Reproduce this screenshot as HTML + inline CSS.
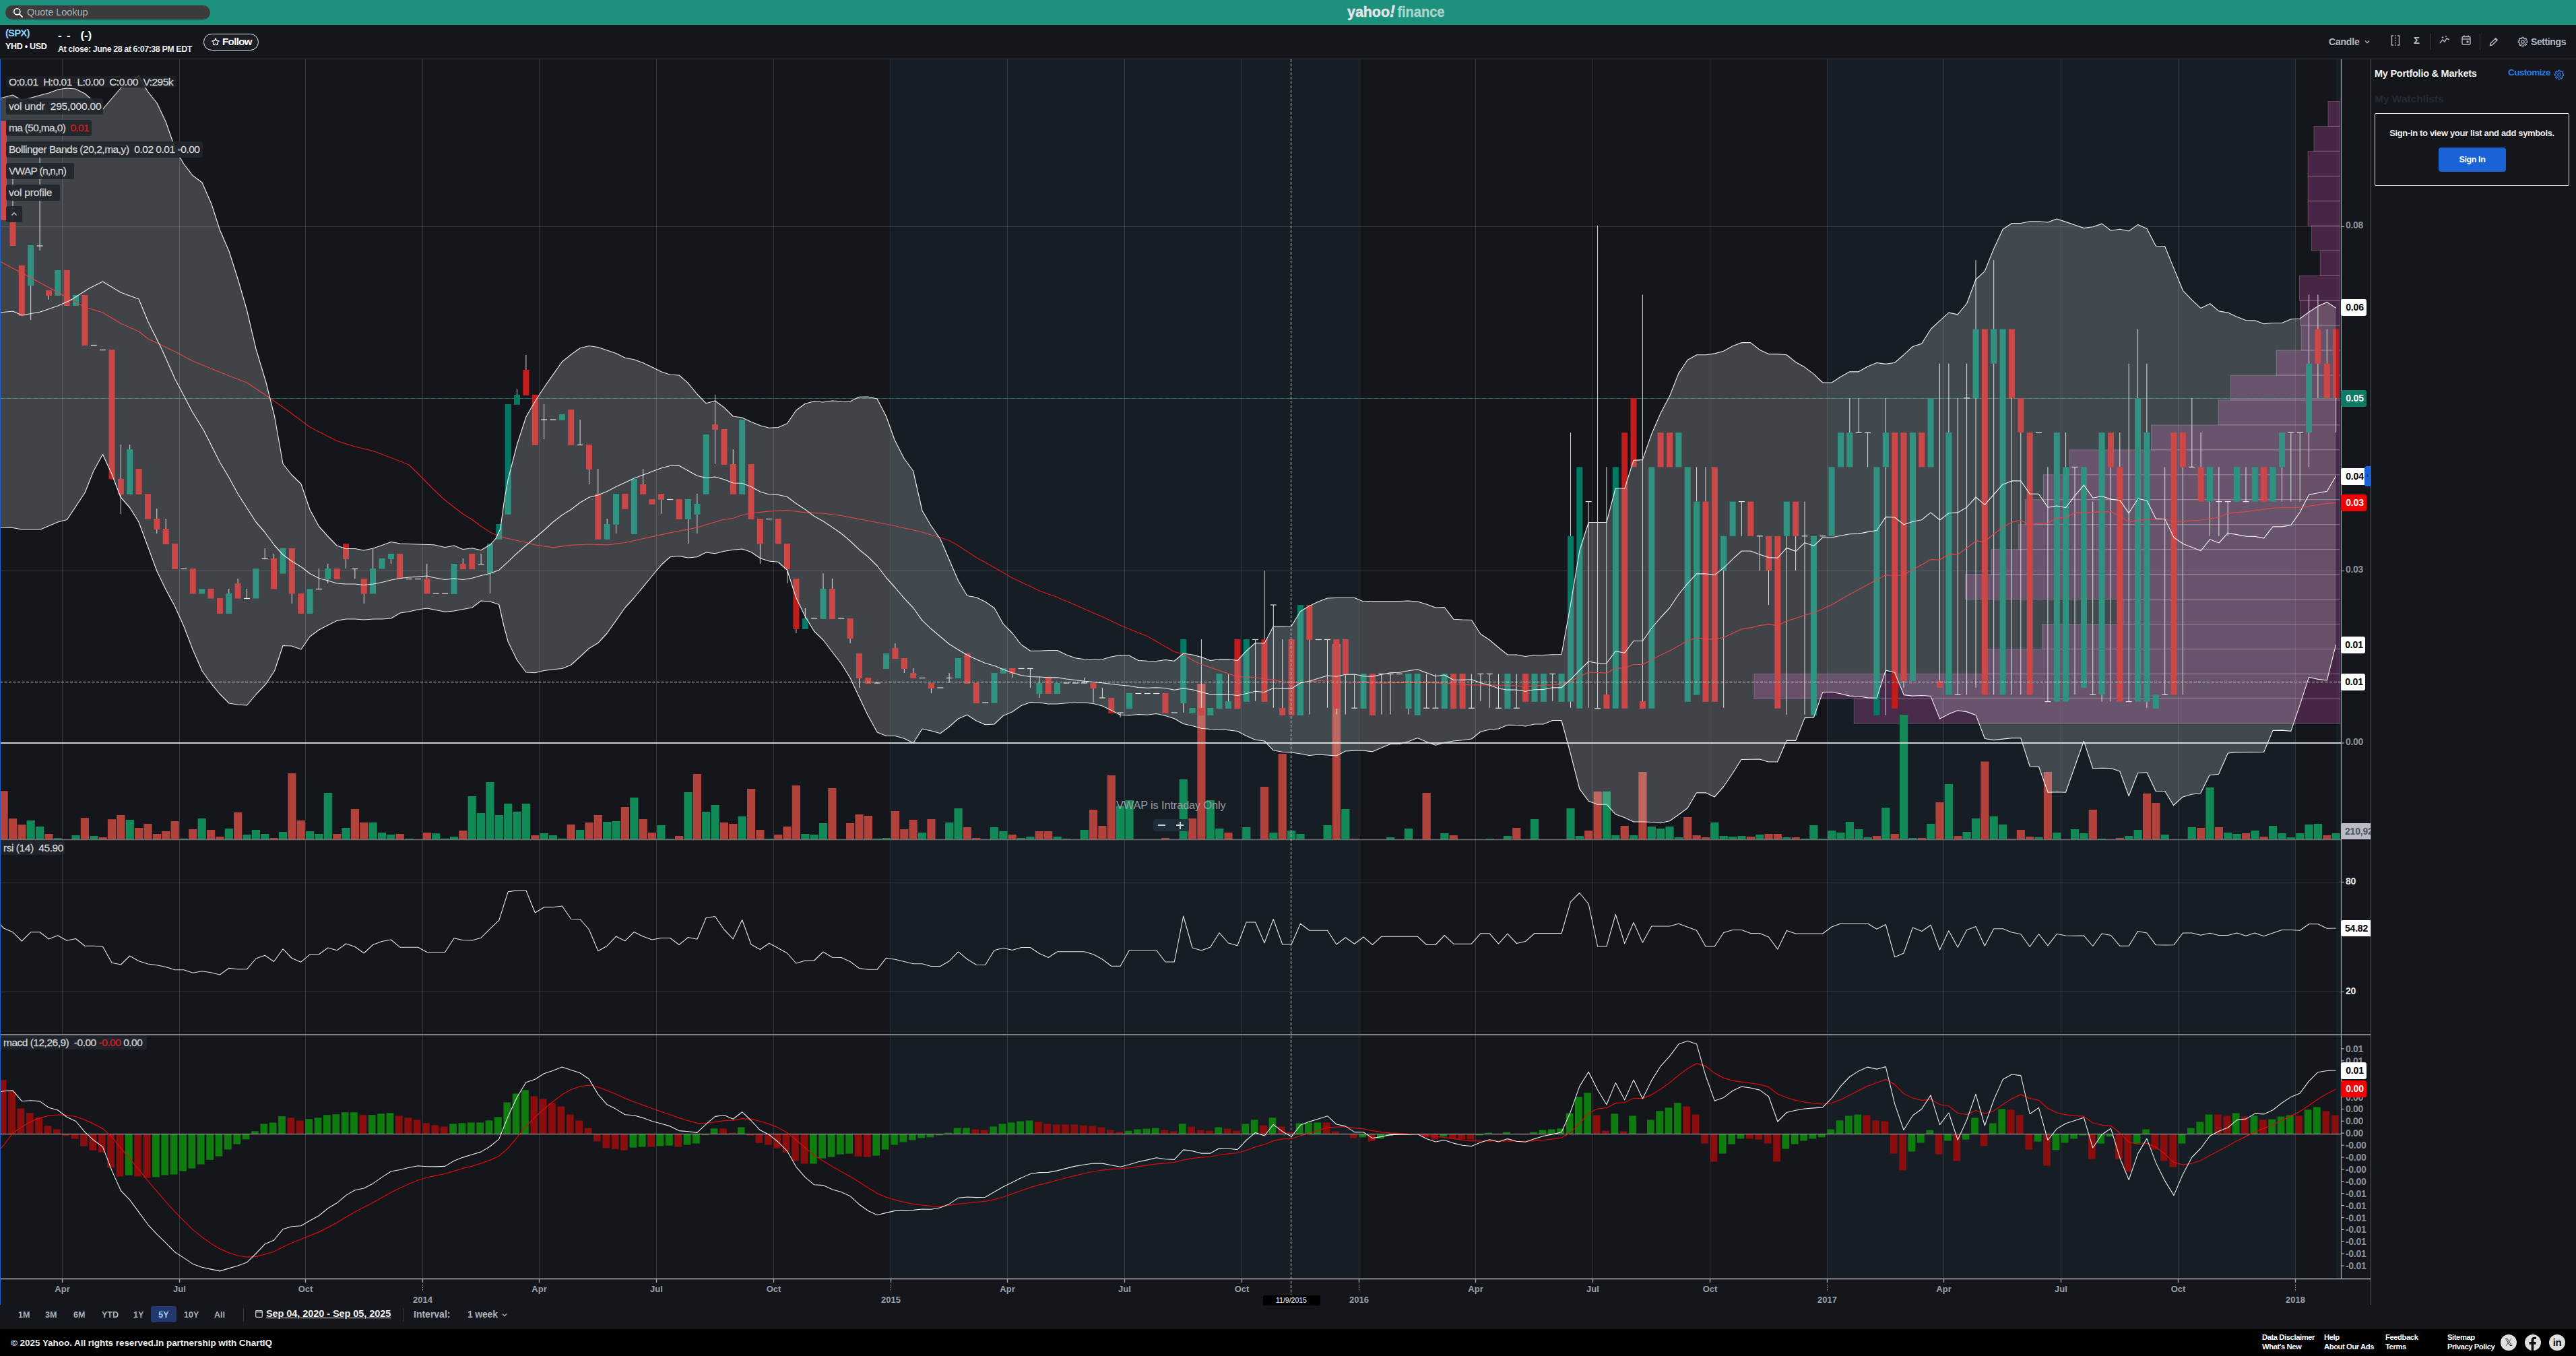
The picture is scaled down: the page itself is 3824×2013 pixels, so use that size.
<!DOCTYPE html>
<html><head><meta charset="utf-8"><title>chart</title>
<style>
*{box-sizing:border-box;margin:0;padding:0}
html,body{width:3824px;height:2013px;overflow:hidden;background:#14161b;font-family:"Liberation Sans",sans-serif;color:#fff}
.abs{position:absolute}
#hdr{left:0;top:0;width:3824px;height:37px;background:#1c917e}
#search{left:8px;top:8px;width:304px;height:21px;border-radius:11px;background:#3b3b3b}
#search span{position:absolute;left:32px;top:2px;font-size:14.5px;color:#a9b0ba;letter-spacing:-0.05px}
.lbl{-webkit-text-stroke-width:0.3px;position:absolute;left:9px;height:23.5px;background:rgba(33,37,44,0.92);border-radius:3px;font-size:15.5px;line-height:23.5px;color:#d2d2d2;padding-left:4px;white-space:nowrap;letter-spacing:-0.2px}
.ax{position:absolute;left:3482px;font-size:14px;letter-spacing:-0.3px;font-weight:bold;color:#8c939d;line-height:16px}
.axb{position:absolute;left:3475px;width:38px;height:25px;border-radius:3px;background:#fff;color:#000;font-size:14px;font-weight:bold;line-height:25px;text-align:center;padding-left:3px;letter-spacing:-0.2px}
.xl{position:absolute;font-size:13px;font-weight:bold;color:#9aa1ab;transform:translateX(-50%);white-space:nowrap}
.rng{position:absolute;top:1939.5px;height:24px;font-size:12.5px;font-weight:bold;color:#aab1bb;line-height:24px;text-align:center}
.ft{position:absolute;font-size:12.5px;color:#fff;white-space:nowrap;line-height:14px}
</style></head><body>
<div id="hdr" class="abs"></div>
<div id="search" class="abs"><svg class="abs" style="left:11px;top:3px" width="16" height="16" viewBox="0 0 16 16"><circle cx="6.3" cy="6.3" r="4.6" fill="none" stroke="#fff" stroke-width="1.6"/><line x1="9.8" y1="9.8" x2="14" y2="14" stroke="#fff" stroke-width="1.8" stroke-linecap="round"/></svg><span>Quote Lookup</span></div>
<svg class="abs" style="left:1996px;top:0px" width="160" height="37" viewBox="0 0 160 37">
<text x="4" y="25.200" font-family="Liberation Sans" font-weight="bold" font-size="22.300" fill="#e4e4e4" stroke="#e4e4e4" stroke-width="0.500" textLength="63" lengthAdjust="spacingAndGlyphs">yahoo</text>
<text x="67" y="24.500" font-family="Liberation Sans" font-weight="bold" font-style="italic" font-size="24" fill="#e4e4e4" stroke="#e4e4e4" stroke-width="0.500">!</text>
<text x="78.400" y="25.200" font-family="Liberation Sans" font-weight="bold" font-size="22.300" fill="#a9d3cb" stroke="#a9d3cb" stroke-width="0.400" textLength="70" lengthAdjust="spacingAndGlyphs">finance</text>
</svg>

<!-- toolbar -->
<div class="abs" style="left:8px;top:40px;font-size:15px;font-weight:bold;color:#8fd0ff;letter-spacing:-0.9px">(SPX)</div>
<div class="abs" style="left:8px;top:62px;font-size:12.5px;font-weight:bold;color:#fff;letter-spacing:-0.3px">YHD • USD</div>
<div class="abs" style="left:86px;top:42.5px;font-size:17px;font-weight:bold;color:#fff;word-spacing:3px;letter-spacing:-0.2px">- -&nbsp; (-)</div>
<div class="abs" style="left:86px;top:66px;font-size:12.5px;font-weight:bold;color:#e6e6e6;letter-spacing:-0.45px">At close: June 28 at 6:07:38 PM EDT</div>
<div class="abs" style="left:302px;top:50px;width:82px;height:25px;border:1.5px solid #e8e8e8;border-radius:13px;background:#1b1e25"></div>
<svg class="abs" style="left:313px;top:55px" width="14" height="14" viewBox="0 0 24 24"><path d="M12 3.5l2.6 5.6 6.1.7-4.5 4.2 1.2 6-5.4-3-5.4 3 1.2-6L3.3 9.800l6.1-.7z" fill="none" stroke="#fff" stroke-width="2" stroke-linejoin="round"/></svg>
<div class="abs" style="left:330px;top:53px;font-size:15px;font-weight:bold;color:#fff;letter-spacing:-0.6px">Follow</div>

<!-- toolbar right -->
<div class="abs" style="left:3457px;top:54px;font-size:14px;font-weight:bold;color:#b2b9c3;letter-spacing:-0.2px">Candle</div>
<svg class="abs" style="left:3509px;top:57px" width="10" height="10" viewBox="0 0 10 10"><path d="M2 3.5l3 3 3-3" fill="none" stroke="#b2b9c3" stroke-width="1.3"/></svg>
<svg class="abs" style="left:3548px;top:51px" width="16" height="18" viewBox="0 0 16 18"><path d="M5 2H2.500v14H5M11 2h2.500v14H11" fill="none" stroke="#b2b9c3" stroke-width="1.4"/><line x1="8" y1="1" x2="8" y2="17" stroke="#b2b9c3" stroke-width="1.2" stroke-dasharray="2 1.5"/></svg>
<div class="abs" style="left:3583px;top:51px;font-size:15px;font-weight:bold;color:#b2b9c3">Σ</div>
<div class="abs" style="left:3608px;top:50px;width:1px;height:24px;background:#3a3f47"></div>
<svg class="abs" style="left:3621px;top:52px" width="16" height="14" viewBox="0 0 16 14"><path d="M1 12l4-5 3 3 3-5 4 2" fill="none" stroke="#b2b9c3" stroke-width="1.4"/><path d="M5 2v3M3.500 3.500h3M10 1v2M9 2h2" stroke="#b2b9c3" stroke-width="0.9"/></svg>
<svg class="abs" style="left:3654px;top:52px" width="14" height="15" viewBox="0 0 14 15"><rect x="1" y="2.500" width="12" height="11.500" rx="1.500" fill="none" stroke="#b2b9c3" stroke-width="1.4"/><line x1="1" y1="6" x2="13" y2="6" stroke="#b2b9c3" stroke-width="1.4"/><line x1="4" y1="0.500" x2="4" y2="3" stroke="#b2b9c3" stroke-width="1.4"/><line x1="10" y1="0.500" x2="10" y2="3" stroke="#b2b9c3" stroke-width="1.4"/><rect x="7.500" y="8.500" width="3" height="3" fill="#b2b9c3"/></svg>
<div class="abs" style="left:3681px;top:50px;width:1px;height:24px;background:#3a3f47"></div>
<svg class="abs" style="left:3695px;top:55px" width="14" height="14" viewBox="0 0 14 14"><path d="M1.500 12.500l.8-3.300 7.500-7.500 2.500 2.500-7.500 7.500z" fill="none" stroke="#b2b9c3" stroke-width="1.4" stroke-linejoin="round"/><line x1="8.800" y1="2.700" x2="11.300" y2="5.200" stroke="#b2b9c3" stroke-width="1.2"/></svg>
<svg class="abs" style="left:3737px;top:54px" width="16" height="16" viewBox="0 0 16 16"><path d="M6.68 3.07 L6.95 1.38 L9.05 1.38 L9.32 3.07 L10.55 3.58 L11.94 2.58 L13.42 4.06 L12.42 5.45 L12.93 6.68 L14.62 6.95 L14.62 9.05 L12.93 9.32 L12.42 10.55 L13.42 11.94 L11.94 13.42 L10.55 12.42 L9.32 12.93 L9.05 14.62 L6.95 14.62 L6.68 12.93 L5.45 12.42 L4.06 13.42 L2.58 11.94 L3.58 10.55 L3.07 9.32 L1.38 9.05 L1.38 6.95 L3.07 6.68 L3.58 5.45 L2.58 4.06 L4.06 2.58 L5.45 3.58Z" fill="none" stroke="#aab1bb" stroke-width="1.350" stroke-linejoin="round"/><circle cx="8" cy="8" r="2.200" fill="none" stroke="#aab1bb" stroke-width="1.300"/></svg>
<div class="abs" style="left:3757px;top:54px;font-size:14px;font-weight:bold;color:#b2b9c3;letter-spacing:-0.4px">Settings</div>

<div class="abs" style="left:0;top:87px;width:3824px;height:1px;background:#3a3f45"></div>

<!-- chart -->
<svg class="abs" style="left:0;top:0" width="3824" height="2013" viewBox="0 0 3824 2013">
<rect x="1322.5" y="88" width="695.0" height="1810" fill="#161d25"/>
<rect x="2712.5" y="88" width="695.0" height="1810" fill="#161d25"/>
<rect x="3468" y="88" width="7" height="1810" fill="#161d25"/>
<line x1="92.5" y1="88" x2="92.5" y2="1898" stroke="rgba(255,255,255,0.13)" stroke-width="1"/>
<line x1="266.5" y1="88" x2="266.5" y2="1898" stroke="rgba(255,255,255,0.13)" stroke-width="1"/>
<line x1="453.5" y1="88" x2="453.5" y2="1898" stroke="rgba(255,255,255,0.13)" stroke-width="1"/>
<line x1="627.5" y1="88" x2="627.5" y2="1898" stroke="rgba(255,255,255,0.13)" stroke-width="1"/>
<line x1="800.5" y1="88" x2="800.5" y2="1898" stroke="rgba(255,255,255,0.13)" stroke-width="1"/>
<line x1="974.5" y1="88" x2="974.5" y2="1898" stroke="rgba(255,255,255,0.13)" stroke-width="1"/>
<line x1="1148.5" y1="88" x2="1148.5" y2="1898" stroke="rgba(255,255,255,0.13)" stroke-width="1"/>
<line x1="1322.5" y1="88" x2="1322.5" y2="1898" stroke="rgba(255,255,255,0.13)" stroke-width="1"/>
<line x1="1495.5" y1="88" x2="1495.5" y2="1898" stroke="rgba(255,255,255,0.13)" stroke-width="1"/>
<line x1="1669.5" y1="88" x2="1669.5" y2="1898" stroke="rgba(255,255,255,0.13)" stroke-width="1"/>
<line x1="1843.5" y1="88" x2="1843.5" y2="1898" stroke="rgba(255,255,255,0.13)" stroke-width="1"/>
<line x1="2017.5" y1="88" x2="2017.5" y2="1898" stroke="rgba(255,255,255,0.13)" stroke-width="1"/>
<line x1="2190.5" y1="88" x2="2190.5" y2="1898" stroke="rgba(255,255,255,0.13)" stroke-width="1"/>
<line x1="2364.5" y1="88" x2="2364.5" y2="1898" stroke="rgba(255,255,255,0.13)" stroke-width="1"/>
<line x1="2538.5" y1="88" x2="2538.5" y2="1898" stroke="rgba(255,255,255,0.13)" stroke-width="1"/>
<line x1="2712.5" y1="88" x2="2712.5" y2="1898" stroke="rgba(255,255,255,0.13)" stroke-width="1"/>
<line x1="2885.5" y1="88" x2="2885.5" y2="1898" stroke="rgba(255,255,255,0.13)" stroke-width="1"/>
<line x1="3059.5" y1="88" x2="3059.5" y2="1898" stroke="rgba(255,255,255,0.13)" stroke-width="1"/>
<line x1="3233.5" y1="88" x2="3233.5" y2="1898" stroke="rgba(255,255,255,0.13)" stroke-width="1"/>
<line x1="3407.5" y1="88" x2="3407.5" y2="1898" stroke="rgba(255,255,255,0.13)" stroke-width="1"/>
<line x1="0" y1="336.5" x2="3475" y2="336.5" stroke="rgba(255,255,255,0.13)" stroke-width="1"/>
<line x1="0" y1="847.5" x2="3475" y2="847.5" stroke="rgba(255,255,255,0.13)" stroke-width="1"/>
<line x1="0" y1="1309.5" x2="3475" y2="1309.5" stroke="rgba(255,255,255,0.13)" stroke-width="1"/>
<line x1="0" y1="1472.5" x2="3475" y2="1472.5" stroke="rgba(255,255,255,0.13)" stroke-width="1"/>
<g fill="rgba(190,76,165,0.3)" stroke="rgba(200,190,200,0.28)" stroke-width="1">
<rect x="3456" y="150.5" width="17.3" height="37"/>
<rect x="3435" y="187.4" width="38.3" height="37"/>
<rect x="3426" y="224.4" width="47.3" height="37"/>
<rect x="3426" y="261.4" width="47.3" height="37"/>
<rect x="3426" y="298.3" width="47.3" height="37"/>
<rect x="3431.5" y="335.2" width="41.8" height="37"/>
<rect x="3444.2" y="372.2" width="29.1" height="37"/>
<rect x="3413.3" y="409.2" width="60" height="37"/>
<rect x="3414.5" y="446.1" width="58.8" height="37"/>
<rect x="3416.3" y="483.1" width="57" height="37"/>
<rect x="3379.3" y="520" width="94" height="37"/>
<rect x="3311.3" y="557" width="162" height="37"/>
<rect x="3293.4" y="593.9" width="179.9" height="37"/>
<rect x="3193.5" y="630.9" width="279.8" height="37"/>
<rect x="3072.4" y="667.8" width="400.9" height="37"/>
<rect x="3033.3" y="704.8" width="440" height="37"/>
<rect x="3006.3" y="741.7" width="467" height="37"/>
<rect x="2996.4" y="778.7" width="476.9" height="37"/>
<rect x="2956.3" y="815.6" width="517" height="37"/>
<rect x="2917.6" y="852.6" width="555.7" height="37"/>
<rect x="3152" y="889.5" width="321.3" height="37"/>
<rect x="3031.4" y="926.5" width="441.9" height="37"/>
<rect x="2950" y="963.4" width="523.3" height="37"/>
<rect x="2604" y="1000.4" width="869.3" height="37"/>
<rect x="2752.3" y="1037.3" width="721" height="37"/>
</g>
<rect x="-0.5" y="1174.2" width="12.2" height="71.8" fill="#b2423c"/>
<rect x="12.9" y="1215.2" width="12.2" height="30.8" fill="#b2423c"/>
<rect x="26.3" y="1224.2" width="12.2" height="21.8" fill="#b2423c"/>
<rect x="39.6" y="1218" width="12.2" height="28" fill="#118a58"/>
<rect x="53" y="1227" width="12.2" height="19" fill="#118a58"/>
<rect x="66.4" y="1238" width="12.2" height="8" fill="#b2423c"/>
<rect x="79.7" y="1244.2" width="12.2" height="1.8" fill="#118a58"/>
<rect x="106.5" y="1240" width="12.2" height="6" fill="#118a58"/>
<rect x="119.8" y="1214.2" width="12.2" height="31.8" fill="#b2423c"/>
<rect x="133.2" y="1241" width="12.2" height="5" fill="#118a58"/>
<rect x="146.6" y="1243" width="12.2" height="3" fill="#b2423c"/>
<rect x="159.9" y="1216.2" width="12.2" height="29.8" fill="#b2423c"/>
<rect x="173.3" y="1210" width="12.2" height="36" fill="#b2423c"/>
<rect x="186.7" y="1217" width="12.2" height="29" fill="#118a58"/>
<rect x="200" y="1229" width="12.2" height="17" fill="#b2423c"/>
<rect x="213.4" y="1223" width="12.2" height="23" fill="#b2423c"/>
<rect x="226.8" y="1238" width="12.2" height="8" fill="#b2423c"/>
<rect x="240.1" y="1234" width="12.2" height="12" fill="#b2423c"/>
<rect x="253.5" y="1219" width="12.2" height="27" fill="#b2423c"/>
<rect x="266.9" y="1244.8" width="12.2" height="1.2" fill="#118a58"/>
<rect x="280.2" y="1231" width="12.2" height="15" fill="#b2423c"/>
<rect x="293.6" y="1215" width="12.2" height="31" fill="#118a58"/>
<rect x="307" y="1232" width="12.2" height="14" fill="#b2423c"/>
<rect x="320.3" y="1242" width="12.2" height="4" fill="#b2423c"/>
<rect x="333.7" y="1230" width="12.2" height="16" fill="#118a58"/>
<rect x="347.1" y="1206" width="12.2" height="40" fill="#b2423c"/>
<rect x="360.4" y="1239" width="12.2" height="7" fill="#118a58"/>
<rect x="373.8" y="1232" width="12.2" height="14" fill="#118a58"/>
<rect x="387.2" y="1238" width="12.2" height="8" fill="#118a58"/>
<rect x="400.5" y="1244" width="12.2" height="2" fill="#b2423c"/>
<rect x="413.9" y="1235" width="12.2" height="11" fill="#118a58"/>
<rect x="427.3" y="1148" width="12.2" height="98" fill="#b2423c"/>
<rect x="440.6" y="1218" width="12.2" height="28" fill="#b2423c"/>
<rect x="454" y="1234" width="12.2" height="12" fill="#118a58"/>
<rect x="467.4" y="1238" width="12.2" height="8" fill="#118a58"/>
<rect x="480.7" y="1177" width="12.2" height="69" fill="#118a58"/>
<rect x="494.1" y="1238" width="12.2" height="8" fill="#b2423c"/>
<rect x="507.5" y="1229" width="12.2" height="17" fill="#118a58"/>
<rect x="520.8" y="1201" width="12.2" height="45" fill="#b2423c"/>
<rect x="534.2" y="1221" width="12.2" height="25" fill="#b2423c"/>
<rect x="547.6" y="1221" width="12.2" height="25" fill="#118a58"/>
<rect x="560.9" y="1236" width="12.2" height="10" fill="#118a58"/>
<rect x="574.3" y="1239" width="12.2" height="7" fill="#118a58"/>
<rect x="587.7" y="1238" width="12.2" height="8" fill="#b2423c"/>
<rect x="601" y="1245" width="12.2" height="1" fill="#118a58"/>
<rect x="627.8" y="1236" width="12.2" height="10" fill="#b2423c"/>
<rect x="641.1" y="1237.2" width="12.2" height="8.8" fill="#118a58"/>
<rect x="654.5" y="1244.8" width="12.2" height="1.2" fill="#118a58"/>
<rect x="667.9" y="1242.2" width="12.2" height="3.8" fill="#118a58"/>
<rect x="681.2" y="1233" width="12.2" height="13" fill="#b2423c"/>
<rect x="694.6" y="1182" width="12.2" height="64" fill="#118a58"/>
<rect x="708" y="1207" width="12.2" height="39" fill="#118a58"/>
<rect x="721.3" y="1161" width="12.2" height="85" fill="#118a58"/>
<rect x="734.7" y="1210" width="12.2" height="36" fill="#118a58"/>
<rect x="748.1" y="1193" width="12.2" height="53" fill="#118a58"/>
<rect x="761.4" y="1204.8" width="12.2" height="41.2" fill="#118a58"/>
<rect x="774.8" y="1193" width="12.2" height="53" fill="#118a58"/>
<rect x="788.2" y="1240" width="12.2" height="6" fill="#b2423c"/>
<rect x="801.5" y="1237" width="12.2" height="9" fill="#118a58"/>
<rect x="814.9" y="1240" width="12.2" height="6" fill="#118a58"/>
<rect x="828.3" y="1244.8" width="12.2" height="1.2" fill="#118a58"/>
<rect x="841.6" y="1224" width="12.2" height="22" fill="#b2423c"/>
<rect x="855" y="1232" width="12.2" height="14" fill="#118a58"/>
<rect x="868.4" y="1221" width="12.2" height="25" fill="#b2423c"/>
<rect x="881.7" y="1210" width="12.2" height="36" fill="#b2423c"/>
<rect x="895.1" y="1220" width="12.2" height="26" fill="#118a58"/>
<rect x="908.5" y="1219" width="12.2" height="27" fill="#118a58"/>
<rect x="921.8" y="1198" width="12.2" height="48" fill="#b2423c"/>
<rect x="935.2" y="1184" width="12.2" height="62" fill="#118a58"/>
<rect x="948.6" y="1216" width="12.2" height="30" fill="#b2423c"/>
<rect x="961.9" y="1236" width="12.2" height="10" fill="#b2423c"/>
<rect x="975.3" y="1225" width="12.2" height="21" fill="#118a58"/>
<rect x="988.7" y="1245" width="12.2" height="1" fill="#118a58"/>
<rect x="1002" y="1241" width="12.2" height="5" fill="#b2423c"/>
<rect x="1015.4" y="1176" width="12.2" height="70" fill="#118a58"/>
<rect x="1028.8" y="1149" width="12.2" height="97" fill="#b2423c"/>
<rect x="1042.1" y="1205" width="12.2" height="41" fill="#118a58"/>
<rect x="1055.5" y="1195" width="12.2" height="51" fill="#118a58"/>
<rect x="1068.9" y="1221" width="12.2" height="25" fill="#b2423c"/>
<rect x="1082.2" y="1223" width="12.2" height="23" fill="#b2423c"/>
<rect x="1095.6" y="1212" width="12.2" height="34" fill="#118a58"/>
<rect x="1109" y="1171" width="12.2" height="75" fill="#b2423c"/>
<rect x="1122.3" y="1232" width="12.2" height="14" fill="#b2423c"/>
<rect x="1135.7" y="1245" width="12.2" height="1" fill="#118a58"/>
<rect x="1149.1" y="1239" width="12.2" height="7" fill="#b2423c"/>
<rect x="1162.4" y="1227" width="12.2" height="19" fill="#b2423c"/>
<rect x="1175.8" y="1166" width="12.2" height="80" fill="#b2423c"/>
<rect x="1189.2" y="1238" width="12.2" height="8" fill="#118a58"/>
<rect x="1202.5" y="1239" width="12.2" height="7" fill="#118a58"/>
<rect x="1215.9" y="1222" width="12.2" height="24" fill="#118a58"/>
<rect x="1229.3" y="1170" width="12.2" height="76" fill="#b2423c"/>
<rect x="1256" y="1222" width="12.2" height="24" fill="#b2423c"/>
<rect x="1269.4" y="1209" width="12.2" height="37" fill="#b2423c"/>
<rect x="1282.8" y="1211" width="12.2" height="35" fill="#b2423c"/>
<rect x="1296.1" y="1244.8" width="12.2" height="1.2" fill="#118a58"/>
<rect x="1309.5" y="1244" width="12.2" height="2" fill="#118a58"/>
<rect x="1322.9" y="1204" width="12.2" height="42" fill="#b2423c"/>
<rect x="1336.2" y="1231" width="12.2" height="15" fill="#b2423c"/>
<rect x="1349.6" y="1217" width="12.2" height="29" fill="#b2423c"/>
<rect x="1363" y="1236" width="12.2" height="10" fill="#118a58"/>
<rect x="1376.3" y="1216" width="12.2" height="30" fill="#b2423c"/>
<rect x="1403.1" y="1221" width="12.2" height="25" fill="#118a58"/>
<rect x="1416.4" y="1200" width="12.2" height="46" fill="#118a58"/>
<rect x="1429.8" y="1228" width="12.2" height="18" fill="#b2423c"/>
<rect x="1443.2" y="1244" width="12.2" height="2" fill="#b2423c"/>
<rect x="1469.9" y="1228" width="12.2" height="18" fill="#118a58"/>
<rect x="1483.3" y="1234" width="12.2" height="12" fill="#118a58"/>
<rect x="1496.6" y="1239" width="12.2" height="7" fill="#b2423c"/>
<rect x="1510" y="1244" width="12.2" height="2" fill="#118a58"/>
<rect x="1523.4" y="1242" width="12.2" height="4" fill="#118a58"/>
<rect x="1536.7" y="1234" width="12.2" height="12" fill="#b2423c"/>
<rect x="1550.1" y="1234" width="12.2" height="12" fill="#b2423c"/>
<rect x="1563.5" y="1242" width="12.2" height="4" fill="#118a58"/>
<rect x="1576.8" y="1245" width="12.2" height="1" fill="#118a58"/>
<rect x="1603.6" y="1232" width="12.2" height="14" fill="#118a58"/>
<rect x="1616.9" y="1202" width="12.2" height="44" fill="#b2423c"/>
<rect x="1630.3" y="1226" width="12.2" height="20" fill="#b2423c"/>
<rect x="1643.7" y="1151" width="12.2" height="95" fill="#b2423c"/>
<rect x="1657" y="1196" width="12.2" height="50" fill="#118a58"/>
<rect x="1670.4" y="1188" width="12.2" height="58" fill="#118a58"/>
<rect x="1723.9" y="1244" width="12.2" height="2" fill="#b2423c"/>
<rect x="1750.6" y="1157" width="12.2" height="89" fill="#118a58"/>
<rect x="1764" y="1215" width="12.2" height="31" fill="#b2423c"/>
<rect x="1777.3" y="1015" width="12.2" height="231" fill="#b2423c"/>
<rect x="1790.7" y="1188" width="12.2" height="58" fill="#118a58"/>
<rect x="1804.1" y="1230" width="12.2" height="16" fill="#118a58"/>
<rect x="1817.4" y="1236" width="12.2" height="10" fill="#b2423c"/>
<rect x="1844.2" y="1228" width="12.2" height="18" fill="#118a58"/>
<rect x="1870.9" y="1168" width="12.2" height="78" fill="#b2423c"/>
<rect x="1884.3" y="1236" width="12.2" height="10" fill="#118a58"/>
<rect x="1897.6" y="1119" width="12.2" height="127" fill="#b2423c"/>
<rect x="1911" y="1233" width="12.2" height="13" fill="#118a58"/>
<rect x="1924.4" y="1238" width="12.2" height="8" fill="#118a58"/>
<rect x="1964.5" y="1225" width="12.2" height="21" fill="#118a58"/>
<rect x="1977.8" y="956" width="12.2" height="290" fill="#b2423c"/>
<rect x="1991.2" y="1201" width="12.2" height="45" fill="#118a58"/>
<rect x="2004.6" y="1245" width="12.2" height="1" fill="#b2423c"/>
<rect x="2058" y="1243" width="12.2" height="3" fill="#118a58"/>
<rect x="2084.8" y="1230" width="12.2" height="16" fill="#118a58"/>
<rect x="2111.5" y="1177" width="12.2" height="69" fill="#b2423c"/>
<rect x="2138.2" y="1237" width="12.2" height="9" fill="#118a58"/>
<rect x="2151.6" y="1240" width="12.2" height="6" fill="#b2423c"/>
<rect x="2205.1" y="1245" width="12.2" height="1" fill="#118a58"/>
<rect x="2231.8" y="1241" width="12.2" height="5" fill="#118a58"/>
<rect x="2245.2" y="1229" width="12.2" height="17" fill="#b2423c"/>
<rect x="2271.9" y="1216" width="12.2" height="30" fill="#118a58"/>
<rect x="2325.4" y="1200" width="12.2" height="46" fill="#118a58"/>
<rect x="2338.7" y="1241" width="12.2" height="5" fill="#118a58"/>
<rect x="2352.1" y="1233" width="12.2" height="13" fill="#b2423c"/>
<rect x="2365.5" y="1175" width="12.2" height="71" fill="#b2423c"/>
<rect x="2378.8" y="1175" width="12.2" height="71" fill="#118a58"/>
<rect x="2392.2" y="1240" width="12.2" height="6" fill="#118a58"/>
<rect x="2405.6" y="1226" width="12.2" height="20" fill="#b2423c"/>
<rect x="2418.9" y="1240" width="12.2" height="6" fill="#118a58"/>
<rect x="2432.3" y="1146" width="12.2" height="100" fill="#b2423c"/>
<rect x="2445.7" y="1227" width="12.2" height="19" fill="#118a58"/>
<rect x="2459" y="1230" width="12.2" height="16" fill="#118a58"/>
<rect x="2472.4" y="1227" width="12.2" height="19" fill="#118a58"/>
<rect x="2485.8" y="1243" width="12.2" height="3" fill="#118a58"/>
<rect x="2499.1" y="1213" width="12.2" height="33" fill="#b2423c"/>
<rect x="2512.5" y="1240" width="12.2" height="6" fill="#b2423c"/>
<rect x="2525.9" y="1243" width="12.2" height="3" fill="#b2423c"/>
<rect x="2539.2" y="1221" width="12.2" height="25" fill="#118a58"/>
<rect x="2552.6" y="1241" width="12.2" height="5" fill="#118a58"/>
<rect x="2566" y="1242" width="12.2" height="4" fill="#118a58"/>
<rect x="2579.4" y="1241" width="12.2" height="5" fill="#118a58"/>
<rect x="2592.7" y="1242" width="12.2" height="4" fill="#b2423c"/>
<rect x="2606.1" y="1239" width="12.2" height="7" fill="#118a58"/>
<rect x="2619.5" y="1238" width="12.2" height="8" fill="#b2423c"/>
<rect x="2632.8" y="1238" width="12.2" height="8" fill="#b2423c"/>
<rect x="2646.2" y="1243" width="12.2" height="3" fill="#118a58"/>
<rect x="2659.6" y="1243" width="12.2" height="3" fill="#b2423c"/>
<rect x="2672.9" y="1245" width="12.2" height="1" fill="#118a58"/>
<rect x="2686.3" y="1225" width="12.2" height="21" fill="#118a58"/>
<rect x="2699.7" y="1245" width="12.2" height="1" fill="#118a58"/>
<rect x="2713" y="1233" width="12.2" height="13" fill="#118a58"/>
<rect x="2726.4" y="1236" width="12.2" height="10" fill="#118a58"/>
<rect x="2739.8" y="1220" width="12.2" height="26" fill="#118a58"/>
<rect x="2753.1" y="1231" width="12.2" height="15" fill="#118a58"/>
<rect x="2766.5" y="1243" width="12.2" height="3" fill="#118a58"/>
<rect x="2779.9" y="1241" width="12.2" height="5" fill="#b2423c"/>
<rect x="2793.2" y="1199" width="12.2" height="47" fill="#118a58"/>
<rect x="2806.6" y="1238" width="12.2" height="8" fill="#b2423c"/>
<rect x="2820" y="1061" width="12.2" height="185" fill="#118a58"/>
<rect x="2833.3" y="1244" width="12.2" height="2" fill="#118a58"/>
<rect x="2846.7" y="1244" width="12.2" height="2" fill="#b2423c"/>
<rect x="2860.1" y="1223" width="12.2" height="23" fill="#118a58"/>
<rect x="2873.4" y="1191" width="12.2" height="55" fill="#b2423c"/>
<rect x="2886.8" y="1164" width="12.2" height="82" fill="#118a58"/>
<rect x="2900.2" y="1241" width="12.2" height="5" fill="#b2423c"/>
<rect x="2913.5" y="1235" width="12.2" height="11" fill="#118a58"/>
<rect x="2926.9" y="1215" width="12.2" height="31" fill="#118a58"/>
<rect x="2940.3" y="1130.5" width="12.2" height="115.5" fill="#b2423c"/>
<rect x="2953.6" y="1212" width="12.2" height="34" fill="#118a58"/>
<rect x="2967" y="1224" width="12.2" height="22" fill="#118a58"/>
<rect x="2980.4" y="1245" width="12.2" height="1" fill="#b2423c"/>
<rect x="2993.7" y="1232" width="12.2" height="14" fill="#b2423c"/>
<rect x="3007.1" y="1242" width="12.2" height="4" fill="#b2423c"/>
<rect x="3020.5" y="1243" width="12.2" height="3" fill="#118a58"/>
<rect x="3033.8" y="1146" width="12.2" height="100" fill="#b2423c"/>
<rect x="3047.2" y="1236" width="12.2" height="10" fill="#118a58"/>
<rect x="3073.9" y="1231" width="12.2" height="15" fill="#118a58"/>
<rect x="3087.3" y="1237" width="12.2" height="9" fill="#118a58"/>
<rect x="3100.7" y="1202" width="12.2" height="44" fill="#b2423c"/>
<rect x="3114" y="1245" width="12.2" height="1" fill="#118a58"/>
<rect x="3140.8" y="1244" width="12.2" height="2" fill="#b2423c"/>
<rect x="3154.1" y="1241" width="12.2" height="5" fill="#118a58"/>
<rect x="3167.5" y="1232" width="12.2" height="14" fill="#118a58"/>
<rect x="3180.9" y="1178" width="12.2" height="68" fill="#b2423c"/>
<rect x="3194.2" y="1192" width="12.2" height="54" fill="#b2423c"/>
<rect x="3207.6" y="1239" width="12.2" height="7" fill="#118a58"/>
<rect x="3247.7" y="1228" width="12.2" height="18" fill="#118a58"/>
<rect x="3261.1" y="1229" width="12.2" height="17" fill="#b2423c"/>
<rect x="3274.4" y="1169" width="12.2" height="77" fill="#118a58"/>
<rect x="3287.8" y="1228" width="12.2" height="18" fill="#b2423c"/>
<rect x="3301.2" y="1236" width="12.2" height="10" fill="#118a58"/>
<rect x="3314.5" y="1238" width="12.2" height="8" fill="#118a58"/>
<rect x="3327.9" y="1237" width="12.2" height="9" fill="#b2423c"/>
<rect x="3341.3" y="1233" width="12.2" height="13" fill="#118a58"/>
<rect x="3354.6" y="1242" width="12.2" height="4" fill="#b2423c"/>
<rect x="3368" y="1226" width="12.2" height="20" fill="#118a58"/>
<rect x="3381.4" y="1237" width="12.2" height="9" fill="#118a58"/>
<rect x="3394.7" y="1243" width="12.2" height="3" fill="#118a58"/>
<rect x="3408.1" y="1237" width="12.2" height="9" fill="#118a58"/>
<rect x="3421.5" y="1224" width="12.2" height="22" fill="#118a58"/>
<rect x="3434.8" y="1223" width="12.2" height="23" fill="#118a58"/>
<rect x="3448.2" y="1240" width="12.2" height="6" fill="#b2423c"/>
<rect x="3461.6" y="1237" width="12.2" height="9" fill="#118a58"/>
<line x1="0" y1="1246.5" x2="3475" y2="1246.5" stroke="#6d6f73" stroke-width="1.5"/>
<line x1="0" y1="1103" x2="3475" y2="1103" stroke="#d0d0d0" stroke-width="2"/>
<line x1="0" y1="591.5" x2="3475" y2="591.5" stroke="rgba(255,255,255,0.2)" stroke-width="1"/>
<line x1="0" y1="591.5" x2="3475" y2="591.5" stroke="#107a66" stroke-width="1.2" stroke-dasharray="6 4"/>
<rect x="1.1" y="180" width="9" height="147" fill="#c41c1c"/>
<line x1="19" y1="257" x2="19" y2="328" stroke="#dcdcdc" stroke-width="1"/>
<rect x="14.5" y="328" width="9" height="37" fill="#c41c1c"/>
<rect x="27.8" y="394" width="9" height="75" fill="#c41c1c"/>
<line x1="45.7" y1="424" x2="45.7" y2="475" stroke="#dcdcdc" stroke-width="1"/>
<rect x="41.2" y="364" width="9" height="60" fill="#007a64"/>
<line x1="59.1" y1="233" x2="59.1" y2="372" stroke="#dcdcdc" stroke-width="1"/>
<line x1="54.6" y1="365" x2="63.6" y2="365" stroke="#dcdcdc" stroke-width="1.2"/>
<line x1="72.4" y1="439" x2="72.4" y2="445" stroke="#dcdcdc" stroke-width="1"/>
<rect x="67.9" y="431" width="9" height="8" fill="#c41c1c"/>
<rect x="81.3" y="401" width="9" height="38" fill="#007a64"/>
<rect x="94.7" y="401" width="9" height="53" fill="#c41c1c"/>
<rect x="108" y="438" width="9" height="16" fill="#007a64"/>
<rect x="121.4" y="438" width="9" height="75" fill="#c41c1c"/>
<line x1="134.8" y1="512.5" x2="143.8" y2="512.5" stroke="#dcdcdc" stroke-width="1.2"/>
<line x1="148.1" y1="519.5" x2="157.1" y2="519.5" stroke="#dcdcdc" stroke-width="1.2"/>
<rect x="161.5" y="519" width="9" height="192.5" fill="#c41c1c"/>
<line x1="179.4" y1="660" x2="179.4" y2="711" stroke="#dcdcdc" stroke-width="1"/>
<line x1="179.4" y1="734" x2="179.4" y2="763" stroke="#dcdcdc" stroke-width="1"/>
<rect x="174.9" y="711" width="9" height="23" fill="#c41c1c"/>
<line x1="192.7" y1="660" x2="192.7" y2="667" stroke="#dcdcdc" stroke-width="1"/>
<rect x="188.2" y="667" width="9" height="67" fill="#007a64"/>
<rect x="201.6" y="696" width="9" height="38" fill="#c41c1c"/>
<rect x="215" y="733" width="9" height="38" fill="#c41c1c"/>
<line x1="232.8" y1="755" x2="232.8" y2="770" stroke="#dcdcdc" stroke-width="1"/>
<line x1="232.8" y1="786" x2="232.8" y2="792" stroke="#dcdcdc" stroke-width="1"/>
<rect x="228.3" y="770" width="9" height="16" fill="#c41c1c"/>
<line x1="246.2" y1="770" x2="246.2" y2="785" stroke="#dcdcdc" stroke-width="1"/>
<rect x="241.7" y="785" width="9" height="23" fill="#c41c1c"/>
<rect x="255.1" y="807" width="9" height="38" fill="#c41c1c"/>
<line x1="268.4" y1="844.5" x2="277.4" y2="844.5" stroke="#dcdcdc" stroke-width="1.2"/>
<rect x="281.8" y="844" width="9" height="37.5" fill="#c41c1c"/>
<rect x="295.2" y="874" width="9" height="7.5" fill="#007a64"/>
<rect x="308.5" y="874" width="9" height="14.5" fill="#c41c1c"/>
<rect x="321.9" y="888" width="9" height="23" fill="#c41c1c"/>
<line x1="339.8" y1="874" x2="339.8" y2="881" stroke="#dcdcdc" stroke-width="1"/>
<rect x="335.3" y="881" width="9" height="30" fill="#007a64"/>
<line x1="353.1" y1="859" x2="353.1" y2="866" stroke="#dcdcdc" stroke-width="1"/>
<rect x="348.6" y="866" width="9" height="22.5" fill="#c41c1c"/>
<line x1="366.5" y1="874" x2="366.5" y2="888.5" stroke="#dcdcdc" stroke-width="1"/>
<line x1="362" y1="888.5" x2="371" y2="888.5" stroke="#dcdcdc" stroke-width="1.2"/>
<rect x="375.4" y="844" width="9" height="44.5" fill="#007a64"/>
<line x1="393.2" y1="814" x2="393.2" y2="829.5" stroke="#dcdcdc" stroke-width="1"/>
<line x1="388.7" y1="829.5" x2="397.7" y2="829.5" stroke="#dcdcdc" stroke-width="1.2"/>
<line x1="406.6" y1="822" x2="406.6" y2="829" stroke="#dcdcdc" stroke-width="1"/>
<rect x="402.1" y="829" width="9" height="45.5" fill="#c41c1c"/>
<rect x="415.5" y="814" width="9" height="37.5" fill="#007a64"/>
<line x1="433.3" y1="881.5" x2="433.3" y2="896" stroke="#dcdcdc" stroke-width="1"/>
<rect x="428.8" y="814" width="9" height="67.5" fill="#c41c1c"/>
<rect x="442.2" y="881" width="9" height="30" fill="#c41c1c"/>
<rect x="455.6" y="874" width="9" height="37" fill="#007a64"/>
<line x1="473.4" y1="844" x2="473.4" y2="874.5" stroke="#dcdcdc" stroke-width="1"/>
<line x1="468.9" y1="874.5" x2="477.9" y2="874.5" stroke="#dcdcdc" stroke-width="1.2"/>
<line x1="486.8" y1="837" x2="486.8" y2="844" stroke="#dcdcdc" stroke-width="1"/>
<line x1="486.8" y1="860" x2="486.8" y2="866" stroke="#dcdcdc" stroke-width="1"/>
<rect x="482.3" y="844" width="9" height="16" fill="#007a64"/>
<rect x="495.7" y="844" width="9" height="16" fill="#c41c1c"/>
<line x1="513.5" y1="830" x2="513.5" y2="844" stroke="#dcdcdc" stroke-width="1"/>
<rect x="509" y="807" width="9" height="23" fill="#c41c1c"/>
<line x1="526.9" y1="844.5" x2="526.9" y2="859" stroke="#dcdcdc" stroke-width="1"/>
<line x1="522.4" y1="844.5" x2="531.4" y2="844.5" stroke="#dcdcdc" stroke-width="1.2"/>
<line x1="540.3" y1="881.5" x2="540.3" y2="896" stroke="#dcdcdc" stroke-width="1"/>
<rect x="535.8" y="859" width="9" height="22.5" fill="#c41c1c"/>
<line x1="553.6" y1="815" x2="553.6" y2="844" stroke="#dcdcdc" stroke-width="1"/>
<rect x="549.1" y="844" width="9" height="37.5" fill="#007a64"/>
<rect x="562.5" y="829" width="9" height="15.5" fill="#007a64"/>
<line x1="580.4" y1="830" x2="580.4" y2="837" stroke="#dcdcdc" stroke-width="1"/>
<rect x="575.9" y="822" width="9" height="8" fill="#007a64"/>
<rect x="589.2" y="822" width="9" height="37" fill="#c41c1c"/>
<line x1="602.6" y1="859.5" x2="611.6" y2="859.5" stroke="#dcdcdc" stroke-width="1.2"/>
<line x1="616" y1="859.5" x2="625" y2="859.5" stroke="#dcdcdc" stroke-width="1.2"/>
<line x1="633.8" y1="837" x2="633.8" y2="859" stroke="#dcdcdc" stroke-width="1"/>
<rect x="629.3" y="859" width="9" height="22.5" fill="#c41c1c"/>
<line x1="642.7" y1="881" x2="651.7" y2="881" stroke="#dcdcdc" stroke-width="1.2"/>
<line x1="656.1" y1="881" x2="665.1" y2="881" stroke="#dcdcdc" stroke-width="1.2"/>
<rect x="669.5" y="837" width="9" height="45" fill="#007a64"/>
<line x1="687.3" y1="829" x2="687.3" y2="837" stroke="#dcdcdc" stroke-width="1"/>
<rect x="682.8" y="837" width="9" height="8" fill="#c41c1c"/>
<rect x="696.2" y="822" width="9" height="23" fill="#c41c1c"/>
<line x1="714.1" y1="822" x2="714.1" y2="837.5" stroke="#dcdcdc" stroke-width="1"/>
<line x1="709.6" y1="837.5" x2="718.6" y2="837.5" stroke="#dcdcdc" stroke-width="1.2"/>
<line x1="727.4" y1="851" x2="727.4" y2="881" stroke="#dcdcdc" stroke-width="1"/>
<rect x="722.9" y="807" width="9" height="44" fill="#007a64"/>
<rect x="736.3" y="778" width="9" height="22.8" fill="#007a64"/>
<rect x="749.7" y="600" width="9" height="163.8" fill="#007a64"/>
<line x1="767.5" y1="578" x2="767.5" y2="586" stroke="#dcdcdc" stroke-width="1"/>
<rect x="763" y="586" width="9" height="14.8" fill="#007a64"/>
<line x1="780.9" y1="527" x2="780.9" y2="549" stroke="#dcdcdc" stroke-width="1"/>
<rect x="776.4" y="549" width="9" height="38" fill="#c41c1c"/>
<rect x="789.8" y="586" width="9" height="74.8" fill="#c41c1c"/>
<line x1="807.6" y1="600" x2="807.6" y2="652" stroke="#dcdcdc" stroke-width="1"/>
<line x1="803.1" y1="623" x2="812.1" y2="623" stroke="#dcdcdc" stroke-width="1.2"/>
<line x1="816.5" y1="623" x2="825.5" y2="623" stroke="#dcdcdc" stroke-width="1.2"/>
<rect x="829.9" y="615" width="9" height="8.8" fill="#007a64"/>
<rect x="843.2" y="608" width="9" height="52.8" fill="#c41c1c"/>
<line x1="861.1" y1="623" x2="861.1" y2="660.5" stroke="#dcdcdc" stroke-width="1"/>
<line x1="856.6" y1="660.5" x2="865.6" y2="660.5" stroke="#dcdcdc" stroke-width="1.2"/>
<line x1="874.5" y1="697" x2="874.5" y2="719" stroke="#dcdcdc" stroke-width="1"/>
<rect x="870" y="660" width="9" height="37" fill="#c41c1c"/>
<line x1="887.8" y1="696" x2="887.8" y2="733" stroke="#dcdcdc" stroke-width="1"/>
<rect x="883.3" y="733" width="9" height="67.8" fill="#c41c1c"/>
<line x1="901.2" y1="770" x2="901.2" y2="778" stroke="#dcdcdc" stroke-width="1"/>
<rect x="896.7" y="778" width="9" height="22.8" fill="#007a64"/>
<line x1="914.6" y1="778.8" x2="914.6" y2="792" stroke="#dcdcdc" stroke-width="1"/>
<rect x="910.1" y="733" width="9" height="45.8" fill="#007a64"/>
<rect x="923.4" y="733" width="9" height="22.8" fill="#c41c1c"/>
<rect x="936.8" y="710.8" width="9" height="82.2" fill="#007a64"/>
<line x1="954.7" y1="696" x2="954.7" y2="719" stroke="#dcdcdc" stroke-width="1"/>
<rect x="950.2" y="719" width="9" height="14.8" fill="#c41c1c"/>
<rect x="963.5" y="741" width="9" height="7.8" fill="#c41c1c"/>
<line x1="981.4" y1="741.8" x2="981.4" y2="762.5" stroke="#dcdcdc" stroke-width="1"/>
<rect x="976.9" y="733" width="9" height="8.8" fill="#c41c1c"/>
<line x1="990.3" y1="741.5" x2="999.3" y2="741.5" stroke="#dcdcdc" stroke-width="1.2"/>
<rect x="1003.6" y="741" width="9" height="29.8" fill="#c41c1c"/>
<line x1="1021.5" y1="770.8" x2="1021.5" y2="807" stroke="#dcdcdc" stroke-width="1"/>
<rect x="1017" y="741" width="9" height="29.8" fill="#007a64"/>
<line x1="1034.9" y1="733" x2="1034.9" y2="748" stroke="#dcdcdc" stroke-width="1"/>
<line x1="1034.9" y1="763.8" x2="1034.9" y2="792" stroke="#dcdcdc" stroke-width="1"/>
<rect x="1030.4" y="748" width="9" height="15.8" fill="#007a64"/>
<rect x="1043.7" y="645" width="9" height="88.8" fill="#007a64"/>
<line x1="1061.6" y1="585.8" x2="1061.6" y2="630" stroke="#dcdcdc" stroke-width="1"/>
<line x1="1061.6" y1="638" x2="1061.6" y2="688.8" stroke="#dcdcdc" stroke-width="1"/>
<rect x="1057.1" y="630" width="9" height="8" fill="#c41c1c"/>
<rect x="1070.5" y="637" width="9" height="53" fill="#c41c1c"/>
<line x1="1088.3" y1="667" x2="1088.3" y2="689" stroke="#dcdcdc" stroke-width="1"/>
<rect x="1083.8" y="689" width="9" height="44.8" fill="#c41c1c"/>
<rect x="1097.2" y="623" width="9" height="110.8" fill="#007a64"/>
<rect x="1110.6" y="689" width="9" height="81.8" fill="#c41c1c"/>
<line x1="1128.4" y1="807.5" x2="1128.4" y2="837" stroke="#dcdcdc" stroke-width="1"/>
<rect x="1123.9" y="770" width="9" height="37.5" fill="#c41c1c"/>
<line x1="1137.3" y1="770.5" x2="1146.3" y2="770.5" stroke="#dcdcdc" stroke-width="1.2"/>
<rect x="1150.7" y="770" width="9" height="37.5" fill="#c41c1c"/>
<line x1="1168.5" y1="845" x2="1168.5" y2="866" stroke="#dcdcdc" stroke-width="1"/>
<rect x="1164" y="807" width="9" height="38" fill="#c41c1c"/>
<line x1="1181.9" y1="934" x2="1181.9" y2="940" stroke="#dcdcdc" stroke-width="1"/>
<rect x="1177.4" y="859" width="9" height="75" fill="#c41c1c"/>
<line x1="1195.3" y1="903" x2="1195.3" y2="918" stroke="#dcdcdc" stroke-width="1"/>
<rect x="1190.8" y="918" width="9" height="16" fill="#007a64"/>
<line x1="1204.1" y1="918" x2="1213.1" y2="918" stroke="#dcdcdc" stroke-width="1.2"/>
<line x1="1222" y1="851" x2="1222" y2="874" stroke="#dcdcdc" stroke-width="1"/>
<rect x="1217.5" y="874" width="9" height="45" fill="#007a64"/>
<line x1="1235.4" y1="859" x2="1235.4" y2="874" stroke="#dcdcdc" stroke-width="1"/>
<rect x="1230.9" y="874" width="9" height="45" fill="#c41c1c"/>
<line x1="1244.2" y1="918" x2="1253.2" y2="918" stroke="#dcdcdc" stroke-width="1.2"/>
<line x1="1262.1" y1="948" x2="1262.1" y2="955" stroke="#dcdcdc" stroke-width="1"/>
<rect x="1257.6" y="918" width="9" height="30" fill="#c41c1c"/>
<line x1="1275.5" y1="1007" x2="1275.5" y2="1021" stroke="#dcdcdc" stroke-width="1"/>
<rect x="1271" y="970" width="9" height="37" fill="#c41c1c"/>
<rect x="1284.3" y="1006" width="9" height="9" fill="#c41c1c"/>
<line x1="1297.7" y1="1014" x2="1306.7" y2="1014" stroke="#dcdcdc" stroke-width="1.2"/>
<rect x="1311.1" y="970" width="9" height="23" fill="#007a64"/>
<line x1="1328.9" y1="955" x2="1328.9" y2="962" stroke="#dcdcdc" stroke-width="1"/>
<rect x="1324.4" y="962" width="9" height="16" fill="#c41c1c"/>
<line x1="1342.3" y1="993" x2="1342.3" y2="999" stroke="#dcdcdc" stroke-width="1"/>
<rect x="1337.8" y="977" width="9" height="16" fill="#c41c1c"/>
<line x1="1355.7" y1="992" x2="1355.7" y2="999" stroke="#dcdcdc" stroke-width="1"/>
<rect x="1351.2" y="999" width="9" height="8" fill="#c41c1c"/>
<line x1="1364.5" y1="1006.5" x2="1373.5" y2="1006.5" stroke="#dcdcdc" stroke-width="1.2"/>
<line x1="1382.4" y1="1022" x2="1382.4" y2="1029" stroke="#dcdcdc" stroke-width="1"/>
<rect x="1377.9" y="1014" width="9" height="8" fill="#c41c1c"/>
<line x1="1391.3" y1="1021" x2="1400.3" y2="1021" stroke="#dcdcdc" stroke-width="1.2"/>
<line x1="1409.1" y1="999" x2="1409.1" y2="1014" stroke="#dcdcdc" stroke-width="1"/>
<line x1="1404.6" y1="1006.5" x2="1413.6" y2="1006.5" stroke="#dcdcdc" stroke-width="1.2"/>
<rect x="1418" y="977" width="9" height="30" fill="#007a64"/>
<rect x="1431.4" y="970" width="9" height="45" fill="#c41c1c"/>
<rect x="1444.7" y="1014" width="9" height="30" fill="#c41c1c"/>
<line x1="1458.1" y1="1043" x2="1467.1" y2="1043" stroke="#dcdcdc" stroke-width="1.2"/>
<rect x="1471.5" y="999" width="9" height="45" fill="#007a64"/>
<rect x="1484.8" y="992" width="9" height="8" fill="#007a64"/>
<line x1="1502.7" y1="1000" x2="1502.7" y2="1006" stroke="#dcdcdc" stroke-width="1"/>
<rect x="1498.2" y="992" width="9" height="8" fill="#c41c1c"/>
<line x1="1511.6" y1="992.5" x2="1520.6" y2="992.5" stroke="#dcdcdc" stroke-width="1.2"/>
<line x1="1529.4" y1="992.5" x2="1529.4" y2="1021" stroke="#dcdcdc" stroke-width="1"/>
<line x1="1524.9" y1="992.5" x2="1533.9" y2="992.5" stroke="#dcdcdc" stroke-width="1.2"/>
<line x1="1542.8" y1="1004" x2="1542.8" y2="1014" stroke="#dcdcdc" stroke-width="1"/>
<line x1="1542.8" y1="1030" x2="1542.8" y2="1036" stroke="#dcdcdc" stroke-width="1"/>
<rect x="1538.3" y="1014" width="9" height="16" fill="#007a64"/>
<rect x="1551.7" y="1006" width="9" height="24" fill="#c41c1c"/>
<rect x="1565" y="1014" width="9" height="16" fill="#007a64"/>
<line x1="1578.4" y1="1014" x2="1587.4" y2="1014" stroke="#dcdcdc" stroke-width="1.2"/>
<line x1="1591.8" y1="1014" x2="1600.8" y2="1014" stroke="#dcdcdc" stroke-width="1.2"/>
<line x1="1609.6" y1="1006" x2="1609.6" y2="1014" stroke="#dcdcdc" stroke-width="1"/>
<line x1="1605.1" y1="1014" x2="1614.1" y2="1014" stroke="#dcdcdc" stroke-width="1.2"/>
<line x1="1623" y1="1022" x2="1623" y2="1043" stroke="#dcdcdc" stroke-width="1"/>
<rect x="1618.5" y="1014" width="9" height="8" fill="#c41c1c"/>
<line x1="1636.4" y1="1021" x2="1636.4" y2="1036" stroke="#dcdcdc" stroke-width="1"/>
<line x1="1631.9" y1="1036" x2="1640.9" y2="1036" stroke="#dcdcdc" stroke-width="1.2"/>
<rect x="1645.2" y="1036" width="9" height="23" fill="#c41c1c"/>
<line x1="1663.1" y1="1058" x2="1663.1" y2="1065" stroke="#dcdcdc" stroke-width="1"/>
<line x1="1658.6" y1="1058" x2="1667.6" y2="1058" stroke="#dcdcdc" stroke-width="1.2"/>
<rect x="1672" y="1029" width="9" height="23" fill="#007a64"/>
<line x1="1685.3" y1="1029.5" x2="1694.3" y2="1029.5" stroke="#dcdcdc" stroke-width="1.2"/>
<line x1="1698.7" y1="1029.5" x2="1707.7" y2="1029.5" stroke="#dcdcdc" stroke-width="1.2"/>
<line x1="1712.1" y1="1029.5" x2="1721.1" y2="1029.5" stroke="#dcdcdc" stroke-width="1.2"/>
<rect x="1725.4" y="1029" width="9" height="30" fill="#c41c1c"/>
<line x1="1738.8" y1="1058" x2="1747.8" y2="1058" stroke="#dcdcdc" stroke-width="1.2"/>
<line x1="1756.7" y1="1044" x2="1756.7" y2="1058" stroke="#dcdcdc" stroke-width="1"/>
<rect x="1752.2" y="949" width="9" height="95" fill="#007a64"/>
<rect x="1765.5" y="1051" width="9" height="8" fill="#007a64"/>
<line x1="1783.4" y1="949" x2="1783.4" y2="1051" stroke="#dcdcdc" stroke-width="1"/>
<rect x="1778.9" y="1051" width="9" height="11" fill="#c41c1c"/>
<rect x="1792.3" y="1051" width="9" height="11" fill="#007a64"/>
<rect x="1805.6" y="1000" width="9" height="52" fill="#007a64"/>
<line x1="1823.5" y1="1001" x2="1823.5" y2="1041" stroke="#dcdcdc" stroke-width="1"/>
<rect x="1819" y="1041" width="9" height="11" fill="#007a64"/>
<rect x="1832.4" y="949" width="9" height="103" fill="#c41c1c"/>
<rect x="1845.7" y="949" width="9" height="92.8" fill="#007a64"/>
<line x1="1863.6" y1="949.5" x2="1863.6" y2="1040.8" stroke="#dcdcdc" stroke-width="1"/>
<line x1="1859.1" y1="949.5" x2="1868.1" y2="949.5" stroke="#dcdcdc" stroke-width="1.2"/>
<line x1="1877" y1="847" x2="1877" y2="949" stroke="#dcdcdc" stroke-width="1"/>
<rect x="1872.5" y="949" width="9" height="92.8" fill="#c41c1c"/>
<line x1="1890.3" y1="898" x2="1890.3" y2="1050.8" stroke="#dcdcdc" stroke-width="1"/>
<line x1="1885.8" y1="898" x2="1894.8" y2="898" stroke="#dcdcdc" stroke-width="1.2"/>
<line x1="1903.7" y1="949" x2="1903.7" y2="1051" stroke="#dcdcdc" stroke-width="1"/>
<rect x="1899.2" y="1051" width="9" height="11" fill="#c41c1c"/>
<rect x="1912.6" y="949" width="9" height="113" fill="#c41c1c"/>
<rect x="1925.9" y="898" width="9" height="164" fill="#007a64"/>
<line x1="1943.8" y1="950" x2="1943.8" y2="1060.5" stroke="#dcdcdc" stroke-width="1"/>
<rect x="1939.3" y="898" width="9" height="52" fill="#c41c1c"/>
<line x1="1952.7" y1="949.5" x2="1961.7" y2="949.5" stroke="#dcdcdc" stroke-width="1.2"/>
<line x1="1970.5" y1="949.5" x2="1970.5" y2="1050.8" stroke="#dcdcdc" stroke-width="1"/>
<line x1="1966" y1="949.5" x2="1975" y2="949.5" stroke="#dcdcdc" stroke-width="1.2"/>
<line x1="1983.9" y1="1052" x2="1983.9" y2="1060.5" stroke="#dcdcdc" stroke-width="1"/>
<rect x="1979.4" y="949" width="9" height="103" fill="#c41c1c"/>
<line x1="1997.3" y1="1001" x2="1997.3" y2="1060.5" stroke="#dcdcdc" stroke-width="1"/>
<rect x="1992.8" y="949" width="9" height="52" fill="#c41c1c"/>
<line x1="2010.7" y1="1000.5" x2="2010.7" y2="1051.2" stroke="#dcdcdc" stroke-width="1"/>
<line x1="2006.2" y1="1051.2" x2="2015.2" y2="1051.2" stroke="#dcdcdc" stroke-width="1.2"/>
<rect x="2019.5" y="1000" width="9" height="52" fill="#007a64"/>
<rect x="2032.9" y="1000" width="9" height="62" fill="#c41c1c"/>
<line x1="2050.8" y1="1000.5" x2="2050.8" y2="1060.5" stroke="#dcdcdc" stroke-width="1"/>
<line x1="2046.3" y1="1000.5" x2="2055.3" y2="1000.5" stroke="#dcdcdc" stroke-width="1.2"/>
<line x1="2064.1" y1="1000.5" x2="2064.1" y2="1060.5" stroke="#dcdcdc" stroke-width="1"/>
<line x1="2059.6" y1="1000.5" x2="2068.6" y2="1000.5" stroke="#dcdcdc" stroke-width="1.2"/>
<line x1="2073" y1="1000.5" x2="2082" y2="1000.5" stroke="#dcdcdc" stroke-width="1.2"/>
<line x1="2090.9" y1="1052" x2="2090.9" y2="1060.5" stroke="#dcdcdc" stroke-width="1"/>
<rect x="2086.4" y="1000" width="9" height="52" fill="#007a64"/>
<rect x="2099.7" y="1000" width="9" height="62" fill="#007a64"/>
<line x1="2117.6" y1="1000.5" x2="2117.6" y2="1051.2" stroke="#dcdcdc" stroke-width="1"/>
<line x1="2113.1" y1="1051.2" x2="2122.1" y2="1051.2" stroke="#dcdcdc" stroke-width="1.2"/>
<line x1="2131" y1="1000.5" x2="2131" y2="1051.2" stroke="#dcdcdc" stroke-width="1"/>
<line x1="2126.5" y1="1051.2" x2="2135.5" y2="1051.2" stroke="#dcdcdc" stroke-width="1.2"/>
<rect x="2139.8" y="1000" width="9" height="52" fill="#007a64"/>
<rect x="2153.2" y="1000" width="9" height="52" fill="#c41c1c"/>
<rect x="2166.6" y="1000" width="9" height="52" fill="#c41c1c"/>
<line x1="2184.4" y1="1000.5" x2="2184.4" y2="1051.2" stroke="#dcdcdc" stroke-width="1"/>
<line x1="2179.9" y1="1051.2" x2="2188.9" y2="1051.2" stroke="#dcdcdc" stroke-width="1.2"/>
<line x1="2197.8" y1="1000.5" x2="2197.8" y2="1040.8" stroke="#dcdcdc" stroke-width="1"/>
<line x1="2193.3" y1="1000.5" x2="2202.3" y2="1000.5" stroke="#dcdcdc" stroke-width="1.2"/>
<line x1="2211.2" y1="1000.5" x2="2211.2" y2="1050.8" stroke="#dcdcdc" stroke-width="1"/>
<line x1="2206.7" y1="1000.5" x2="2215.7" y2="1000.5" stroke="#dcdcdc" stroke-width="1.2"/>
<line x1="2224.5" y1="1000.5" x2="2224.5" y2="1051.2" stroke="#dcdcdc" stroke-width="1"/>
<line x1="2220" y1="1051.2" x2="2229" y2="1051.2" stroke="#dcdcdc" stroke-width="1.2"/>
<rect x="2233.4" y="1000" width="9" height="52" fill="#007a64"/>
<line x1="2251.3" y1="1000.5" x2="2251.3" y2="1051.2" stroke="#dcdcdc" stroke-width="1"/>
<line x1="2246.8" y1="1051.2" x2="2255.8" y2="1051.2" stroke="#dcdcdc" stroke-width="1.2"/>
<rect x="2260.1" y="1000" width="9" height="41.8" fill="#c41c1c"/>
<rect x="2273.5" y="1000" width="9" height="41.8" fill="#007a64"/>
<rect x="2286.9" y="1000" width="9" height="41.8" fill="#007a64"/>
<line x1="2304.7" y1="1000.5" x2="2304.7" y2="1040.8" stroke="#dcdcdc" stroke-width="1"/>
<line x1="2300.2" y1="1000.5" x2="2309.2" y2="1000.5" stroke="#dcdcdc" stroke-width="1.2"/>
<rect x="2313.6" y="1000" width="9" height="41.8" fill="#007a64"/>
<line x1="2331.5" y1="642.2" x2="2331.5" y2="795.8" stroke="#dcdcdc" stroke-width="1"/>
<line x1="2331.5" y1="1041.8" x2="2331.5" y2="1050.8" stroke="#dcdcdc" stroke-width="1"/>
<rect x="2327" y="795.8" width="9" height="246" fill="#007a64"/>
<rect x="2340.3" y="693.4" width="9" height="358.4" fill="#007a64"/>
<line x1="2358.2" y1="744.6" x2="2358.2" y2="1050.8" stroke="#dcdcdc" stroke-width="1"/>
<line x1="2353.7" y1="744.6" x2="2362.7" y2="744.6" stroke="#dcdcdc" stroke-width="1.2"/>
<line x1="2371.6" y1="335" x2="2371.6" y2="1051.8" stroke="#dcdcdc" stroke-width="1"/>
<line x1="2367.1" y1="1051.8" x2="2376.1" y2="1051.8" stroke="#dcdcdc" stroke-width="1.2"/>
<line x1="2384.9" y1="693.4" x2="2384.9" y2="1031" stroke="#dcdcdc" stroke-width="1"/>
<rect x="2380.4" y="1031" width="9" height="21" fill="#c41c1c"/>
<rect x="2393.8" y="693.4" width="9" height="358.4" fill="#007a64"/>
<rect x="2407.2" y="642.2" width="9" height="409.6" fill="#c41c1c"/>
<rect x="2420.5" y="591" width="9" height="102.4" fill="#c41c1c"/>
<line x1="2438.4" y1="437.4" x2="2438.4" y2="1041" stroke="#dcdcdc" stroke-width="1"/>
<rect x="2433.9" y="1041" width="9" height="11" fill="#c41c1c"/>
<rect x="2447.3" y="693.4" width="9" height="358.4" fill="#007a64"/>
<rect x="2460.6" y="642.2" width="9" height="51.2" fill="#c41c1c"/>
<rect x="2474" y="642.2" width="9" height="51.2" fill="#c41c1c"/>
<rect x="2487.4" y="642.2" width="9" height="51.2" fill="#007a64"/>
<rect x="2500.7" y="693.4" width="9" height="348.4" fill="#007a64"/>
<line x1="2518.6" y1="693.4" x2="2518.6" y2="744.6" stroke="#dcdcdc" stroke-width="1"/>
<rect x="2514.1" y="744.6" width="9" height="287.2" fill="#007a64"/>
<line x1="2532" y1="693.4" x2="2532" y2="744.6" stroke="#dcdcdc" stroke-width="1"/>
<rect x="2527.5" y="744.6" width="9" height="297.2" fill="#c41c1c"/>
<rect x="2540.8" y="693.4" width="9" height="348.4" fill="#c41c1c"/>
<line x1="2558.7" y1="847" x2="2558.7" y2="1050.8" stroke="#dcdcdc" stroke-width="1"/>
<rect x="2554.2" y="795.8" width="9" height="51.2" fill="#007a64"/>
<rect x="2567.6" y="744.6" width="9" height="51.2" fill="#007a64"/>
<line x1="2585.4" y1="744.6" x2="2585.4" y2="795.8" stroke="#dcdcdc" stroke-width="1"/>
<line x1="2580.9" y1="744.6" x2="2589.9" y2="744.6" stroke="#dcdcdc" stroke-width="1.2"/>
<rect x="2594.3" y="744.6" width="9" height="51.2" fill="#c41c1c"/>
<line x1="2612.2" y1="795.8" x2="2612.2" y2="847" stroke="#dcdcdc" stroke-width="1"/>
<line x1="2607.7" y1="795.8" x2="2616.7" y2="795.8" stroke="#dcdcdc" stroke-width="1.2"/>
<line x1="2625.5" y1="847" x2="2625.5" y2="898.2" stroke="#dcdcdc" stroke-width="1"/>
<rect x="2621" y="795.8" width="9" height="51.2" fill="#c41c1c"/>
<rect x="2634.4" y="795.8" width="9" height="256" fill="#c41c1c"/>
<line x1="2652.3" y1="795.8" x2="2652.3" y2="1061" stroke="#dcdcdc" stroke-width="1"/>
<rect x="2647.8" y="744.6" width="9" height="51.2" fill="#007a64"/>
<line x1="2665.6" y1="795.8" x2="2665.6" y2="847" stroke="#dcdcdc" stroke-width="1"/>
<rect x="2661.1" y="744.6" width="9" height="51.2" fill="#c41c1c"/>
<line x1="2679" y1="744.6" x2="2679" y2="1061" stroke="#dcdcdc" stroke-width="1"/>
<line x1="2674.5" y1="795.8" x2="2683.5" y2="795.8" stroke="#dcdcdc" stroke-width="1.2"/>
<rect x="2687.9" y="795.8" width="9" height="266.2" fill="#007a64"/>
<line x1="2701.2" y1="795.8" x2="2710.2" y2="795.8" stroke="#dcdcdc" stroke-width="1.2"/>
<rect x="2714.6" y="693.4" width="9" height="102.4" fill="#007a64"/>
<rect x="2728" y="642.2" width="9" height="51.2" fill="#007a64"/>
<line x1="2745.8" y1="591" x2="2745.8" y2="642.2" stroke="#dcdcdc" stroke-width="1"/>
<rect x="2741.3" y="642.2" width="9" height="51.2" fill="#007a64"/>
<line x1="2759.2" y1="591" x2="2759.2" y2="642.2" stroke="#dcdcdc" stroke-width="1"/>
<line x1="2754.7" y1="642.2" x2="2763.7" y2="642.2" stroke="#dcdcdc" stroke-width="1.2"/>
<line x1="2772.6" y1="642.2" x2="2772.6" y2="693.4" stroke="#dcdcdc" stroke-width="1"/>
<line x1="2768.1" y1="642.2" x2="2777.1" y2="642.2" stroke="#dcdcdc" stroke-width="1.2"/>
<rect x="2781.4" y="693.4" width="9" height="368.6" fill="#007a64"/>
<line x1="2799.3" y1="591" x2="2799.3" y2="642.2" stroke="#dcdcdc" stroke-width="1"/>
<line x1="2799.3" y1="693.4" x2="2799.3" y2="1062" stroke="#dcdcdc" stroke-width="1"/>
<rect x="2794.8" y="642.2" width="9" height="51.2" fill="#007a64"/>
<rect x="2808.2" y="642.2" width="9" height="409.6" fill="#c41c1c"/>
<line x1="2826" y1="1010.8" x2="2826" y2="1021.1" stroke="#dcdcdc" stroke-width="1"/>
<rect x="2821.5" y="642.2" width="9" height="368.6" fill="#c41c1c"/>
<rect x="2834.9" y="642.2" width="9" height="368.6" fill="#007a64"/>
<rect x="2848.3" y="642.2" width="9" height="51.2" fill="#c41c1c"/>
<rect x="2861.6" y="591" width="9" height="102.4" fill="#007a64"/>
<line x1="2879.5" y1="539.8" x2="2879.5" y2="1010.8" stroke="#dcdcdc" stroke-width="1"/>
<rect x="2875" y="1010.8" width="9" height="10.2" fill="#c41c1c"/>
<line x1="2892.9" y1="539.8" x2="2892.9" y2="642.2" stroke="#dcdcdc" stroke-width="1"/>
<rect x="2888.4" y="642.2" width="9" height="389.1" fill="#007a64"/>
<line x1="2906.2" y1="591" x2="2906.2" y2="1031.3" stroke="#dcdcdc" stroke-width="1"/>
<line x1="2901.7" y1="1031.3" x2="2910.7" y2="1031.3" stroke="#dcdcdc" stroke-width="1.2"/>
<line x1="2919.6" y1="539.8" x2="2919.6" y2="1031.3" stroke="#dcdcdc" stroke-width="1"/>
<line x1="2915.1" y1="591" x2="2924.1" y2="591" stroke="#dcdcdc" stroke-width="1.2"/>
<line x1="2933" y1="386.2" x2="2933" y2="488.6" stroke="#dcdcdc" stroke-width="1"/>
<line x1="2933" y1="591" x2="2933" y2="1021.1" stroke="#dcdcdc" stroke-width="1"/>
<rect x="2928.5" y="488.6" width="9" height="102.4" fill="#007a64"/>
<rect x="2941.8" y="488.6" width="9" height="542.7" fill="#c41c1c"/>
<line x1="2959.7" y1="386.2" x2="2959.7" y2="488.6" stroke="#dcdcdc" stroke-width="1"/>
<line x1="2959.7" y1="539.8" x2="2959.7" y2="1031.3" stroke="#dcdcdc" stroke-width="1"/>
<rect x="2955.2" y="488.6" width="9" height="51.2" fill="#007a64"/>
<rect x="2968.6" y="488.6" width="9" height="542.7" fill="#007a64"/>
<line x1="2986.4" y1="591" x2="2986.4" y2="1031.3" stroke="#dcdcdc" stroke-width="1"/>
<rect x="2981.9" y="488.6" width="9" height="102.4" fill="#c41c1c"/>
<line x1="2999.8" y1="642.2" x2="2999.8" y2="1031.3" stroke="#dcdcdc" stroke-width="1"/>
<rect x="2995.3" y="591" width="9" height="51.2" fill="#c41c1c"/>
<rect x="3008.7" y="642.2" width="9" height="389.1" fill="#c41c1c"/>
<line x1="3022" y1="642.2" x2="3031" y2="642.2" stroke="#dcdcdc" stroke-width="1.2"/>
<line x1="3039.9" y1="693.4" x2="3039.9" y2="1041.6" stroke="#dcdcdc" stroke-width="1"/>
<line x1="3035.4" y1="1041.6" x2="3044.4" y2="1041.6" stroke="#dcdcdc" stroke-width="1.2"/>
<rect x="3048.8" y="642.2" width="9" height="399.4" fill="#007a64"/>
<line x1="3066.6" y1="642.2" x2="3066.6" y2="693.4" stroke="#dcdcdc" stroke-width="1"/>
<rect x="3062.1" y="693.4" width="9" height="348.2" fill="#007a64"/>
<line x1="3080" y1="693.4" x2="3080" y2="1031.3" stroke="#dcdcdc" stroke-width="1"/>
<line x1="3075.5" y1="693.4" x2="3084.5" y2="693.4" stroke="#dcdcdc" stroke-width="1.2"/>
<rect x="3088.9" y="693.4" width="9" height="327.7" fill="#007a64"/>
<line x1="3106.7" y1="744.6" x2="3106.7" y2="1031.3" stroke="#dcdcdc" stroke-width="1"/>
<line x1="3102.2" y1="1031.3" x2="3111.2" y2="1031.3" stroke="#dcdcdc" stroke-width="1.2"/>
<line x1="3120.1" y1="1031.3" x2="3120.1" y2="1041.6" stroke="#dcdcdc" stroke-width="1"/>
<rect x="3115.6" y="642.2" width="9" height="389.1" fill="#007a64"/>
<line x1="3133.5" y1="693.4" x2="3133.5" y2="1041.6" stroke="#dcdcdc" stroke-width="1"/>
<rect x="3129" y="642.2" width="9" height="51.2" fill="#c41c1c"/>
<line x1="3146.8" y1="642.2" x2="3146.8" y2="693.4" stroke="#dcdcdc" stroke-width="1"/>
<rect x="3142.3" y="693.4" width="9" height="348.2" fill="#c41c1c"/>
<line x1="3160.2" y1="539.8" x2="3160.2" y2="1041.6" stroke="#dcdcdc" stroke-width="1"/>
<line x1="3155.7" y1="1041.6" x2="3164.7" y2="1041.6" stroke="#dcdcdc" stroke-width="1.2"/>
<line x1="3173.6" y1="488.6" x2="3173.6" y2="591" stroke="#dcdcdc" stroke-width="1"/>
<rect x="3169.1" y="591" width="9" height="450.6" fill="#007a64"/>
<line x1="3186.9" y1="539.8" x2="3186.9" y2="642.2" stroke="#dcdcdc" stroke-width="1"/>
<line x1="3186.9" y1="1041.6" x2="3186.9" y2="1050.8" stroke="#dcdcdc" stroke-width="1"/>
<rect x="3182.4" y="642.2" width="9" height="399.4" fill="#007a64"/>
<rect x="3195.8" y="1031.3" width="9" height="20.5" fill="#007a64"/>
<line x1="3213.7" y1="693.4" x2="3213.7" y2="1031.3" stroke="#dcdcdc" stroke-width="1"/>
<line x1="3209.2" y1="1031.3" x2="3218.2" y2="1031.3" stroke="#dcdcdc" stroke-width="1.2"/>
<rect x="3222.5" y="642.2" width="9" height="389.1" fill="#c41c1c"/>
<line x1="3240.4" y1="693.4" x2="3240.4" y2="1031.3" stroke="#dcdcdc" stroke-width="1"/>
<rect x="3235.9" y="642.2" width="9" height="51.2" fill="#c41c1c"/>
<line x1="3253.8" y1="591" x2="3253.8" y2="693.4" stroke="#dcdcdc" stroke-width="1"/>
<line x1="3249.3" y1="693.4" x2="3258.3" y2="693.4" stroke="#dcdcdc" stroke-width="1.2"/>
<line x1="3267.1" y1="642.2" x2="3267.1" y2="693.4" stroke="#dcdcdc" stroke-width="1"/>
<rect x="3262.6" y="693.4" width="9" height="51.2" fill="#c41c1c"/>
<line x1="3280.5" y1="744.6" x2="3280.5" y2="795.8" stroke="#dcdcdc" stroke-width="1"/>
<rect x="3276" y="693.4" width="9" height="51.2" fill="#007a64"/>
<line x1="3293.9" y1="693.4" x2="3293.9" y2="795.8" stroke="#dcdcdc" stroke-width="1"/>
<line x1="3289.4" y1="744.6" x2="3298.4" y2="744.6" stroke="#dcdcdc" stroke-width="1.2"/>
<line x1="3307.2" y1="744.6" x2="3307.2" y2="795.8" stroke="#dcdcdc" stroke-width="1"/>
<line x1="3302.7" y1="744.6" x2="3311.7" y2="744.6" stroke="#dcdcdc" stroke-width="1.2"/>
<rect x="3316.1" y="693.4" width="9" height="51.2" fill="#007a64"/>
<line x1="3334" y1="693.4" x2="3334" y2="744.6" stroke="#dcdcdc" stroke-width="1"/>
<line x1="3329.5" y1="744.6" x2="3338.5" y2="744.6" stroke="#dcdcdc" stroke-width="1.2"/>
<rect x="3342.8" y="693.4" width="9" height="51.2" fill="#007a64"/>
<rect x="3356.2" y="693.4" width="9" height="51.2" fill="#c41c1c"/>
<rect x="3369.6" y="693.4" width="9" height="51.2" fill="#007a64"/>
<line x1="3387.5" y1="693.4" x2="3387.5" y2="744.6" stroke="#dcdcdc" stroke-width="1"/>
<rect x="3383" y="642.2" width="9" height="51.2" fill="#007a64"/>
<line x1="3400.8" y1="642.2" x2="3400.8" y2="744.6" stroke="#dcdcdc" stroke-width="1"/>
<line x1="3396.3" y1="642.2" x2="3405.3" y2="642.2" stroke="#dcdcdc" stroke-width="1.2"/>
<line x1="3414.2" y1="642.2" x2="3414.2" y2="744.6" stroke="#dcdcdc" stroke-width="1"/>
<line x1="3409.7" y1="642.2" x2="3418.7" y2="642.2" stroke="#dcdcdc" stroke-width="1.2"/>
<line x1="3427.6" y1="437.4" x2="3427.6" y2="539.8" stroke="#dcdcdc" stroke-width="1"/>
<line x1="3427.6" y1="642.2" x2="3427.6" y2="693.4" stroke="#dcdcdc" stroke-width="1"/>
<rect x="3423.1" y="539.8" width="9" height="102.4" fill="#007a64"/>
<line x1="3440.9" y1="437.4" x2="3440.9" y2="488.6" stroke="#dcdcdc" stroke-width="1"/>
<line x1="3440.9" y1="539.8" x2="3440.9" y2="591" stroke="#dcdcdc" stroke-width="1"/>
<rect x="3436.4" y="488.6" width="9" height="51.2" fill="#c41c1c"/>
<line x1="3454.3" y1="488.6" x2="3454.3" y2="539.8" stroke="#dcdcdc" stroke-width="1"/>
<rect x="3449.8" y="539.8" width="9" height="51.2" fill="#c41c1c"/>
<line x1="3467.7" y1="591" x2="3467.7" y2="642.2" stroke="#dcdcdc" stroke-width="1"/>
<rect x="3463.2" y="488.6" width="9" height="102.4" fill="#c41c1c"/>
<polyline points="0,388 30,404 75,428 125,455.5 152.5,464 180,480.5 206,492 220,503 260,522 285,535.5 340,558 366.5,568 400,590.5 425,608 460,634 500,654.5 527,663 554,669.5 580.5,679.5 607,690 620.5,703 644,727 660.5,742.5 687.2,763 700.8,771.2 714,781.2 727.5,790 740.8,796.2 754.2,799.5 781,805.5 794,808.8 821,812.8 847.8,809.2 874.5,808 901.2,808.8 928,805.5 954.8,799.5 981.5,793.8 994.8,790.8 1021.5,785.8 1034.8,783 1061.5,775 1075,771.2 1088.2,769.5 1101.8,764.5 1115,762 1141.8,758.8 1168.5,757.5 1195.2,760.8 1222,762 1248.8,765.5 1288,773 1325.5,780 1369,790 1395.8,798 1409.2,802.5 1422.5,810 1449.2,827.5 1476,842.5 1502.8,858 1529.5,870.5 1542.8,877 1569.5,886.8 1596.2,898 1623,910 1636.5,915.5 1663,928.2 1689.8,939.2 1703.2,944.5 1716.5,952 1730,960 1743.2,967.5 1756.8,971.2 1770,980 1783.5,986.2 1810.2,995.5 1837,1004.5 1863.5,1005.5 1877,1008 1890.2,1008.8 1903.8,1012 1917,1013.8 1930.5,1013 1970.5,1009.5 1984,1012 2010.8,1013 2050.8,1013.8 2090.8,1013.2 2144.2,1013.8 2157.8,1015 2184.5,1016.8 2211.2,1016.8 2238,1017.5 2264.5,1018.8 2291.2,1017.5 2318,1015.8 2331.5,1011.2 2344.8,1004.5 2358.2,998 2385,999.2 2398.2,991.8 2411.8,991.8 2425,986.5 2438.5,986.5 2465,972.5 2478.5,966.2 2505.2,951.2 2518.5,946.8 2532,948.8 2545.2,948.8 2558.9,946.3 2585.4,933.9 2598.7,931.8 2612,928.7 2625.6,926.8 2638.9,928.7 2652.2,921.9 2665.8,917.9 2679.1,913.2 2692.4,909.5 2705.7,904 2719.2,897.8 2732.5,890 2745.8,882.3 2759.1,875.2 2772.7,867.8 2786,860.7 2799.3,853.6 2812.6,854.5 2826.2,853.6 2839.5,845.2 2852.7,838.4 2866,830.7 2879.6,831 2892.9,822.7 2906.2,823.3 2919.5,813.7 2933.1,803.2 2946.4,803.8 2959.7,792.7 2973,782.8 2986.6,775.1 2999.8,772.3 3013.1,779.4 3026.4,776.6 3040,776.6 3053.3,768.6 3066.6,768.6 3079.9,761.2 3093.5,761.2 3106.8,760.6 3120,759.6 3133.6,759.6 3146.9,766.4 3160.2,774.8 3173.8,772.6 3187,770.8 3213.6,770.5 3227.2,774.5 3240.5,773.9 3267.1,772 3280.7,770.1 3294,768 3307.3,761.8 3334.1,759.6 3360.7,756.2 3374,754.4 3387.6,753.5 3414.2,753.5 3441,749.4 3454.3,747.3 3467.6,746.4" fill="none" stroke="#e01818" stroke-width="1.2" stroke-linejoin="round"/>
<polygon points="0,146 19,141 32.5,149 57.5,142 72.5,138 86,133 99,131 112,132 126,139 139,150.5 152.5,162 179.5,130.5 206,113 219,135.5 233,153 246,180.5 260,220.5 272.5,243 286,260.5 300,271 314,303 326,340.5 340,373 353.5,415.5 366.5,460.5 380,518 395,568 407.5,618 420,688.5 433,705 447,718.5 454,739 460,756.5 473.5,781.5 487,796.5 500,810 513.5,814.5 527,814.5 540,817 554,814 567,809.5 580.5,804.5 594,807 620.5,808 644,808.8 660.5,812.5 674,810 687.2,815.5 700.8,813.8 714,816.8 727.5,808.8 736.5,798.8 742.8,785 749,740 754,712.5 767.5,660 781,618.8 794,596.2 807.8,575 821,556.2 834.5,537 847.8,526.2 861,516.8 874.5,513.5 887.8,515.5 901.2,520 914.5,524.5 928,531.2 941.2,533.8 954.8,538.8 968,545 981.5,551.8 994.8,556.2 1008.2,557 1021.5,568.8 1034.8,585 1048.2,598.8 1061.5,595 1075,605 1088.2,618 1101.8,620 1115,626.2 1128.5,631.8 1141.8,635.2 1155.2,634.5 1168.5,628.8 1181.8,609.2 1195.2,599.2 1208.5,595.8 1222,597 1235.2,595 1248.8,595.8 1262,596 1275.5,589.2 1288,589 1302,592 1315.5,618 1328,653 1342,680.5 1355.5,699 1369,758 1381.8,780 1395.8,800 1409.2,831.2 1422.5,862 1435.8,884.5 1449.2,886.8 1462.5,893.2 1476,902.5 1489.2,926.2 1502.8,940 1516,957 1529.5,966.2 1542.8,966.2 1556.2,965.5 1569.5,965.5 1583,972 1596.2,976.8 1609.8,978.8 1623,979.2 1636.5,978.8 1649.8,975 1663,972.5 1676.5,973.2 1689.8,980.5 1703.2,981.2 1716.5,981.5 1730,979.5 1743.2,981.2 1756.8,970 1770,972 1783.5,975.5 1796.8,980.5 1810.2,978.8 1823.5,978.8 1837,980.5 1850.2,966.2 1863.5,954.5 1877,955 1890.2,930 1917,929.5 1930.5,907.5 1943.8,899.5 1957.2,893 1970.5,888 1984,887.5 1997.2,887.5 2010.8,887.5 2024,893 2037.5,892.5 2077.5,892.5 2090.8,892 2104.2,893 2117.5,897 2131,902 2144.2,901.5 2157.8,919.2 2171,920 2184.5,920.5 2197.8,941.2 2211.2,950 2224.5,961.2 2238,972 2251.2,972 2264.5,974.5 2278,972.5 2291.2,972.5 2304.8,971.8 2318,971.5 2331.5,897.5 2344.8,817.5 2358.3,775.5 2384.9,775.5 2398.1,725 2411.8,725 2425,683.4 2438.3,682.6 2451.6,644.7 2465.2,613.3 2478.5,588.3 2491.8,554.4 2505,534.5 2518.7,526.7 2532,526.7 2545.2,524.9 2558.5,521.2 2572.1,513.8 2585.4,508.6 2598.7,508.6 2612,519.3 2625.6,525.6 2638.9,525.6 2652.1,526.7 2665.8,537.8 2679,545.1 2692.3,555.1 2705.6,568 2719.2,568 2732.5,559.2 2745.8,551.8 2759,551.8 2772.7,544 2786,538.5 2799.2,540.4 2812.5,538.5 2826.1,526.7 2839.4,514.5 2852.7,510.1 2866.3,488.5 2879.6,476.1 2892.9,464.1 2906.1,466.9 2919.7,450.5 2933,415 2946.3,402.6 2959.6,369.5 2973.2,340.2 2986.5,331.5 2999.8,331.5 3013.1,328.7 3026.7,328.7 3040,330 3053.2,325 3066.5,329.4 3080.1,334 3093.4,338.6 3106.7,336.8 3120.3,332.1 3133.6,342.3 3146.9,340.2 3160.2,343 3173.8,333.4 3187,339.6 3200.3,365.2 3213.6,365.5 3227.2,398.9 3240.5,431.3 3253.8,445.2 3267.1,457.6 3280.7,450.8 3294,461.9 3307.3,464.1 3320.5,470.3 3334.1,475.5 3347.4,475.8 3360.7,480.8 3374,479.5 3387.6,479.5 3400.9,473.7 3414.2,473 3427.5,463.2 3441,454.5 3454.3,448.6 3467.6,457.3 3467.6,957.1 3454.3,1010 3441,1008.4 3427.5,1005.3 3414.2,1046.1 3400.9,1085.4 3387.6,1084.1 3374,1084.4 3360.7,1116.3 3320.5,1116.6 3307.3,1118 3293.5,1149.2 3280,1150.8 3266.8,1177.5 3253.2,1179.2 3240,1183.2 3226.5,1195.5 3213.8,1174.5 3200.2,1174.5 3187,1146.8 3173.5,1147.5 3160.2,1181.8 3146.8,1145 3133.5,1140.5 3120,1140.2 3106.8,1140.8 3093.4,1100.1 3080,1138 3066.5,1176.2 3053.2,1175.8 3040,1176.2 3026.5,1138 3013.2,1137.5 2999.8,1095.6 2986.6,1095.6 2973,1097.1 2959.7,1098.6 2946.4,1096.5 2933.1,1061.6 2919.5,1056.6 2906.2,1054.8 2892.9,1060 2879.6,1067.1 2866,1033.4 2852.7,1032.5 2839.5,1033.1 2826.2,1031.6 2812.6,998.2 2799.3,995.1 2786,1036.2 2772.7,1035.9 2759.1,1033.7 2745.8,1033.1 2732.5,1030 2719.2,1027.3 2705.7,1027.6 2692.4,1065.3 2679.1,1065.6 2665.8,1099.3 2652.2,1099.3 2638.5,1131 2625,1131 2612,1127 2585,1127.5 2572,1148 2558.8,1167.5 2545.2,1183 2532,1176.8 2518.5,1176.8 2505.2,1199.5 2491.8,1209.5 2478.5,1218.8 2465,1221.8 2451.8,1220.5 2438.5,1220 2425,1220 2411.8,1213.8 2398.2,1208.8 2385,1194.2 2371.5,1194.2 2358.2,1189.2 2344.8,1171.2 2331.5,1119 2318,1069.5 2304.8,1069.5 2291.2,1075 2278,1075 2264.5,1078 2251.2,1076.5 2238,1076.2 2224.5,1082 2211.2,1083 2197.8,1086.2 2184.5,1097 2171,1098.8 2157.8,1100 2144.2,1102.5 2131,1106.2 2117.5,1101.2 2104.2,1095.5 2090.8,1100.8 2077.5,1104.5 2064,1104.5 2050.8,1110 2037.5,1115.8 2024,1114.2 2010.8,1114.2 1997.2,1115 1984,1122 1970.5,1121 1957.2,1120 1943.8,1121.5 1930.5,1119 1917,1117 1903.8,1116.2 1890.2,1113.8 1877,1100 1863.5,1098.2 1850.2,1092.5 1837,1085.5 1823.5,1083.8 1810.2,1083 1796.8,1082.5 1783.5,1081.2 1770,1077.5 1756.8,1074.5 1743.2,1066.8 1730,1062.5 1716.5,1059.5 1703.2,1061.2 1689.8,1060.5 1676.5,1062 1663,1061.2 1649.8,1054.5 1636.5,1048 1623,1044.5 1609.8,1043 1596.2,1043 1583,1043.8 1569.5,1045 1556.2,1045 1542.8,1043 1529.5,1042.5 1516,1047.5 1502.8,1056.8 1489.2,1062.5 1476,1075 1462.5,1075.8 1449.2,1070 1435.8,1061.2 1422.5,1067 1409.2,1078.8 1395.8,1088.8 1382.5,1085 1369,1082 1355.8,1103 1342.2,1096.2 1329,1092.5 1315.5,1092.5 1302.2,1087 1288,1061.2 1275.5,1035 1262,1006.2 1248.8,985 1235.2,967.5 1222,950 1208.5,937 1195.2,915 1181.8,887.5 1168.5,846.2 1155.2,834.2 1141.8,833 1128.5,828.8 1115,819.5 1101.8,815 1088.2,816.2 1075,818.2 1061.5,821.8 1048.2,820 1034.8,826.8 1021.5,828 1008.2,825.5 994.8,826.8 981.5,838.8 968,855 954.8,871.2 941.2,887.5 928,902 914.5,921.2 901.2,940 887.8,954.5 874.5,962.5 861,975 847.8,987 834.5,992.5 821,993.8 807.8,995.5 794.2,998.8 781,998 767.5,980 754.2,952.5 747.5,927.5 740.8,897.5 727.5,893 714,892 700.8,902 674,907 660.5,908.2 644,905 634,903 620.5,905 607,908 594,910 580.5,918 567,919 554,919 540,920 527,919 513.5,919 500,921.5 487,928 473.5,935 460,945 447,964 433,959 420,958.5 407.5,996 395,1015 380,1031 366.5,1047 353,1046 340,1044 326,1030 312.5,1013.5 300,996 286,964 273,930 259.5,900 246,875 233,848 219.5,811.5 206,775 193,754 179,738 166,704 152.5,674.5 139,699 126,731.5 99.5,771.5 86,775 60,786 32.5,786 19,783.5 0,783" fill="rgba(242,252,250,0.2)"/>
<polyline points="0,146 19,141 32.5,149 57.5,142 72.5,138 86,133 99,131 112,132 126,139 139,150.5 152.5,162 179.5,130.5 206,113 219,135.5 233,153 246,180.5 260,220.5 272.5,243 286,260.5 300,271 314,303 326,340.5 340,373 353.5,415.5 366.5,460.5 380,518 395,568 407.5,618 420,688.5 433,705 447,718.5 454,739 460,756.5 473.5,781.5 487,796.5 500,810 513.5,814.5 527,814.5 540,817 554,814 567,809.5 580.5,804.5 594,807 620.5,808 644,808.8 660.5,812.5 674,810 687.2,815.5 700.8,813.8 714,816.8 727.5,808.8 736.5,798.8 742.8,785 749,740 754,712.5 767.5,660 781,618.8 794,596.2 807.8,575 821,556.2 834.5,537 847.8,526.2 861,516.8 874.5,513.5 887.8,515.5 901.2,520 914.5,524.5 928,531.2 941.2,533.8 954.8,538.8 968,545 981.5,551.8 994.8,556.2 1008.2,557 1021.5,568.8 1034.8,585 1048.2,598.8 1061.5,595 1075,605 1088.2,618 1101.8,620 1115,626.2 1128.5,631.8 1141.8,635.2 1155.2,634.5 1168.5,628.8 1181.8,609.2 1195.2,599.2 1208.5,595.8 1222,597 1235.2,595 1248.8,595.8 1262,596 1275.5,589.2 1288,589 1302,592 1315.5,618 1328,653 1342,680.5 1355.5,699 1369,758 1381.8,780 1395.8,800 1409.2,831.2 1422.5,862 1435.8,884.5 1449.2,886.8 1462.5,893.2 1476,902.5 1489.2,926.2 1502.8,940 1516,957 1529.5,966.2 1542.8,966.2 1556.2,965.5 1569.5,965.5 1583,972 1596.2,976.8 1609.8,978.8 1623,979.2 1636.5,978.8 1649.8,975 1663,972.5 1676.5,973.2 1689.8,980.5 1703.2,981.2 1716.5,981.5 1730,979.5 1743.2,981.2 1756.8,970 1770,972 1783.5,975.5 1796.8,980.5 1810.2,978.8 1823.5,978.8 1837,980.5 1850.2,966.2 1863.5,954.5 1877,955 1890.2,930 1917,929.5 1930.5,907.5 1943.8,899.5 1957.2,893 1970.5,888 1984,887.5 1997.2,887.5 2010.8,887.5 2024,893 2037.5,892.5 2077.5,892.5 2090.8,892 2104.2,893 2117.5,897 2131,902 2144.2,901.5 2157.8,919.2 2171,920 2184.5,920.5 2197.8,941.2 2211.2,950 2224.5,961.2 2238,972 2251.2,972 2264.5,974.5 2278,972.5 2291.2,972.5 2304.8,971.8 2318,971.5 2331.5,897.5 2344.8,817.5 2358.3,775.5 2384.9,775.5 2398.1,725 2411.8,725 2425,683.4 2438.3,682.6 2451.6,644.7 2465.2,613.3 2478.5,588.3 2491.8,554.4 2505,534.5 2518.7,526.7 2532,526.7 2545.2,524.9 2558.5,521.2 2572.1,513.8 2585.4,508.6 2598.7,508.6 2612,519.3 2625.6,525.6 2638.9,525.6 2652.1,526.7 2665.8,537.8 2679,545.1 2692.3,555.1 2705.6,568 2719.2,568 2732.5,559.2 2745.8,551.8 2759,551.8 2772.7,544 2786,538.5 2799.2,540.4 2812.5,538.5 2826.1,526.7 2839.4,514.5 2852.7,510.1 2866.3,488.5 2879.6,476.1 2892.9,464.1 2906.1,466.9 2919.7,450.5 2933,415 2946.3,402.6 2959.6,369.5 2973.2,340.2 2986.5,331.5 2999.8,331.5 3013.1,328.7 3026.7,328.7 3040,330 3053.2,325 3066.5,329.4 3080.1,334 3093.4,338.6 3106.7,336.8 3120.3,332.1 3133.6,342.3 3146.9,340.2 3160.2,343 3173.8,333.4 3187,339.6 3200.3,365.2 3213.6,365.5 3227.2,398.9 3240.5,431.3 3253.8,445.2 3267.1,457.6 3280.7,450.8 3294,461.9 3307.3,464.1 3320.5,470.3 3334.1,475.5 3347.4,475.8 3360.7,480.8 3374,479.5 3387.6,479.5 3400.9,473.7 3414.2,473 3427.5,463.2 3441,454.5 3454.3,448.6 3467.6,457.3" fill="none" stroke="#ededed" stroke-width="1.15" stroke-linejoin="round"/>
<polyline points="0,783 19,783.5 32.5,786 60,786 86,775 99.5,771.5 126,731.5 139,699 152.5,674.5 166,704 179,738 193,754 206,775 219.5,811.5 233,848 246,875 259.5,900 273,930 286,964 300,996 312.5,1013.5 326,1030 340,1044 353,1046 366.5,1047 380,1031 395,1015 407.5,996 420,958.5 433,959 447,964 460,945 473.5,935 487,928 500,921.5 513.5,919 527,919 540,920 554,919 567,919 580.5,918 594,910 607,908 620.5,905 634,903 644,905 660.5,908.2 674,907 700.8,902 714,892 727.5,893 740.8,897.5 747.5,927.5 754.2,952.5 767.5,980 781,998 794.2,998.8 807.8,995.5 821,993.8 834.5,992.5 847.8,987 861,975 874.5,962.5 887.8,954.5 901.2,940 914.5,921.2 928,902 941.2,887.5 954.8,871.2 968,855 981.5,838.8 994.8,826.8 1008.2,825.5 1021.5,828 1034.8,826.8 1048.2,820 1061.5,821.8 1075,818.2 1088.2,816.2 1101.8,815 1115,819.5 1128.5,828.8 1141.8,833 1155.2,834.2 1168.5,846.2 1181.8,887.5 1195.2,915 1208.5,937 1222,950 1235.2,967.5 1248.8,985 1262,1006.2 1275.5,1035 1288,1061.2 1302.2,1087 1315.5,1092.5 1329,1092.5 1342.2,1096.2 1355.8,1103 1369,1082 1382.5,1085 1395.8,1088.8 1409.2,1078.8 1422.5,1067 1435.8,1061.2 1449.2,1070 1462.5,1075.8 1476,1075 1489.2,1062.5 1502.8,1056.8 1516,1047.5 1529.5,1042.5 1542.8,1043 1556.2,1045 1569.5,1045 1583,1043.8 1596.2,1043 1609.8,1043 1623,1044.5 1636.5,1048 1649.8,1054.5 1663,1061.2 1676.5,1062 1689.8,1060.5 1703.2,1061.2 1716.5,1059.5 1730,1062.5 1743.2,1066.8 1756.8,1074.5 1770,1077.5 1783.5,1081.2 1796.8,1082.5 1810.2,1083 1823.5,1083.8 1837,1085.5 1850.2,1092.5 1863.5,1098.2 1877,1100 1890.2,1113.8 1903.8,1116.2 1917,1117 1930.5,1119 1943.8,1121.5 1957.2,1120 1970.5,1121 1984,1122 1997.2,1115 2010.8,1114.2 2024,1114.2 2037.5,1115.8 2050.8,1110 2064,1104.5 2077.5,1104.5 2090.8,1100.8 2104.2,1095.5 2117.5,1101.2 2131,1106.2 2144.2,1102.5 2157.8,1100 2171,1098.8 2184.5,1097 2197.8,1086.2 2211.2,1083 2224.5,1082 2238,1076.2 2251.2,1076.5 2264.5,1078 2278,1075 2291.2,1075 2304.8,1069.5 2318,1069.5 2331.5,1119 2344.8,1171.2 2358.2,1189.2 2371.5,1194.2 2385,1194.2 2398.2,1208.8 2411.8,1213.8 2425,1220 2438.5,1220 2451.8,1220.5 2465,1221.8 2478.5,1218.8 2491.8,1209.5 2505.2,1199.5 2518.5,1176.8 2532,1176.8 2545.2,1183 2558.8,1167.5 2572,1148 2585,1127.5 2612,1127 2625,1131 2638.5,1131 2652.2,1099.3 2665.8,1099.3 2679.1,1065.6 2692.4,1065.3 2705.7,1027.6 2719.2,1027.3 2732.5,1030 2745.8,1033.1 2759.1,1033.7 2772.7,1035.9 2786,1036.2 2799.3,995.1 2812.6,998.2 2826.2,1031.6 2839.5,1033.1 2852.7,1032.5 2866,1033.4 2879.6,1067.1 2892.9,1060 2906.2,1054.8 2919.5,1056.6 2933.1,1061.6 2946.4,1096.5 2959.7,1098.6 2973,1097.1 2986.6,1095.6 2999.8,1095.6 3013.2,1137.5 3026.5,1138 3040,1176.2 3053.2,1175.8 3066.5,1176.2 3080,1138 3093.4,1100.1 3106.8,1140.8 3120,1140.2 3133.5,1140.5 3146.8,1145 3160.2,1181.8 3173.5,1147.5 3187,1146.8 3200.2,1174.5 3213.8,1174.5 3226.5,1195.5 3240,1183.2 3253.2,1179.2 3266.8,1177.5 3280,1150.8 3293.5,1149.2 3307.3,1118 3320.5,1116.6 3360.7,1116.3 3374,1084.4 3387.6,1084.1 3400.9,1085.4 3414.2,1046.1 3427.5,1005.3 3441,1008.4 3454.3,1010 3467.6,957.1" fill="none" stroke="#ededed" stroke-width="1.15" stroke-linejoin="round"/>
<polyline points="0,464 19,462 32.5,468 60,463 86,454 105,445.5 132.5,428 152.5,418 179,434 206,444 220,478 240,518 260,563 285,610.5 302.5,639 326.5,686.5 340,709 353,733 366.5,754 380,775 393,790 407,809 420,823.5 433,833 447,841.5 460,851.5 473.5,858.5 487,862 500,866 513.5,867 527,867 540,868.5 554,867 567,864.5 580.5,861 594,858.5 607,857 620.5,856 634,855 644,857.5 660.5,860.5 674,858.8 687.2,860.5 700.8,858.2 714,854.5 727.5,851.2 740.8,846.2 754.2,833.8 767.5,821.2 781,809.5 794.2,798.8 807.8,787 821,775 834.5,764.5 847.8,756.2 861,746.2 874.5,738.2 887.8,735 901.2,729.5 914.5,722.5 928,716.2 941.2,710 954.8,705 968,700 981.5,695 994.8,691.5 1008.2,691.2 1021.5,698.8 1034.8,706.2 1048.2,709.5 1061.5,708 1075,711.8 1088.2,717 1101.8,717.5 1115,722.5 1128.5,730 1141.8,734 1155.2,734.5 1168.5,737.5 1181.8,747.5 1195.2,756.2 1208.5,766.2 1222,773.8 1235.2,782.5 1248.8,792 1262,803 1275.5,816 1288,826 1302.2,840 1315.5,857.5 1329,872.5 1342.2,888.2 1355.8,902.5 1369,921.2 1382.5,933.8 1395.8,945 1409.2,956.2 1422.5,964.5 1435.8,972.5 1449.2,978.8 1462.5,984.5 1476,988.2 1489.2,993.8 1502.8,998.8 1516,1002.5 1529.5,1004.5 1542.8,1005 1556.2,1005.8 1569.5,1005.8 1583,1008 1596.2,1009.5 1609.8,1011.2 1623,1012.5 1636.5,1013.8 1649.8,1015.5 1663,1017 1676.5,1018.2 1689.8,1020.5 1703.2,1021.2 1716.5,1020.8 1730,1021.5 1743.2,1024.2 1756.8,1022 1770,1023.8 1783.5,1027.5 1796.8,1030.8 1810.2,1030.5 1823.5,1030.8 1837,1032.5 1850.2,1029.5 1863.5,1026.2 1877,1027.5 1890.2,1021.5 1903.8,1022.5 1917,1022.5 1930.5,1013.8 1943.8,1011.2 1957.2,1007 1970.5,1003 1984,1004.2 1997.2,1001.2 2010.8,1001 2024,1003.8 2037.5,1004.2 2050.8,1001.2 2064,998.8 2077.5,998.2 2090.8,995.8 2104.2,993.8 2117.5,998.8 2131,1003.8 2144.2,1002 2157.8,1009.5 2171,1009.2 2184.5,1008.8 2197.8,1013.8 2211.2,1017 2224.5,1022 2238,1024.2 2251.2,1024.2 2264.5,1026.2 2278,1023.8 2291.2,1023.5 2304.8,1020.8 2318,1020.8 2331.5,1008.8 2344.8,995 2358.2,982 2371.5,984.5 2385,984.5 2398.2,966.8 2411.8,969.2 2425,951.5 2438.5,951.5 2451.8,932.5 2465,917 2478.5,902.5 2491.8,882.5 2505.2,866.2 2518.5,851.8 2532,851.8 2545.3,853.6 2558.9,842.8 2572.2,829.8 2585.4,818 2598.7,818 2612,823 2625.6,827.6 2638.9,828.2 2652.2,813.4 2665.8,818.4 2679.1,805.7 2692.4,810.3 2705.7,798 2719.2,798 2732.5,795.2 2745.8,792.7 2759.1,792.4 2772.7,789.6 2786,787.5 2799.3,767.4 2812.6,768 2826.2,778.8 2839.5,774.2 2852.7,771.7 2866,760.9 2879.6,772 2892.9,761.8 2906.2,760.9 2919.5,753.2 2933.1,738 2946.4,749.4 2959.7,734 2973,719.2 2986.6,713.9 2999.8,713.9 3013.1,733.1 3026.4,733.4 3040,753.2 3053.3,751 3066.6,753.5 3079.9,736.2 3093.5,720.1 3106.8,739.2 3120,736.5 3133.6,741.1 3146.9,742.6 3160.2,761.8 3173.8,740.2 3187,743.3 3200.3,770.1 3213.6,770.5 3227.2,798 3240.5,807.2 3253.8,812.5 3267.1,817.7 3280.7,800.7 3294,806 3307.3,791.2 3320.5,793.6 3334.1,796.1 3347.4,796.4 3360.7,798.9 3374,781.9 3387.6,781.9 3400.9,779.4 3414.2,760.3 3427.5,734.6 3441,731.8 3454.3,729.4 3467.6,706.8" fill="none" stroke="#ededed" stroke-width="1.15" stroke-linejoin="round"/>
<line x1="0" y1="1012.5" x2="3475" y2="1012.5" stroke="#dedede" stroke-width="1" stroke-dasharray="4 2.500"/>
<line x1="1916.5" y1="88" x2="1916.5" y2="1922" stroke="#dedede" stroke-width="1" stroke-dasharray="4 2.500"/>
<line x1="0" y1="1536" x2="3519" y2="1536" stroke="#7c7e82" stroke-width="2"/>
<polyline points="0,1372 5.6,1378 19,1383.8 32.3,1397 45.7,1383.8 59.1,1383.8 72.4,1394 85.8,1388.8 99.2,1396.2 112.5,1393.5 125.9,1404.2 139.3,1404.2 152.6,1405.2 166,1429.2 179.4,1432 192.7,1419 206.1,1426.8 219.5,1431 232.8,1432.8 246.2,1435.5 259.6,1439.8 272.9,1439.8 286.3,1444.2 299.7,1441.8 313,1443.8 326.4,1447 339.8,1437.2 353.1,1438.8 366.5,1438.8 379.9,1423 393.2,1418.2 406.6,1427.5 420,1408.8 433.3,1422.5 446.7,1428.2 460.1,1416.8 473.4,1416.8 486.8,1407 500.2,1410.8 513.5,1401 526.9,1405.5 540.3,1415 553.6,1402.5 567,1397.5 580.4,1395 593.7,1406.2 607.1,1406.2 620.5,1406.2 633.8,1413.5 647.2,1413.5 660.6,1413.5 674,1392.8 687.3,1395.8 700.7,1396 714.1,1392.2 727.4,1378.8 740.8,1366.2 754.2,1323.8 767.5,1321.8 780.9,1321.8 794.3,1355 807.6,1346.8 821,1346.8 834.4,1345 847.7,1364.2 861.1,1364.5 874.5,1380 887.8,1411.8 901.2,1404.2 914.6,1390.2 927.9,1396.8 941.3,1383.5 954.7,1390.2 968,1395 981.4,1392.5 994.8,1392.5 1008.1,1402.5 1021.5,1391.5 1034.9,1394.2 1048.2,1362.5 1061.6,1360.5 1075,1380 1088.3,1393.8 1101.7,1365.5 1115.1,1402.2 1128.4,1409.5 1141.8,1400.2 1155.2,1407.5 1168.5,1415 1181.9,1430 1195.3,1426 1208.6,1426 1222,1413 1235.4,1421.2 1248.7,1421.5 1262.1,1427.5 1275.5,1437.5 1288.8,1439.2 1302.2,1439.2 1315.6,1422.2 1328.9,1424.2 1342.3,1427.5 1355.7,1430.8 1369,1430.8 1382.4,1434.5 1395.8,1434.5 1409.1,1426.8 1422.5,1412.8 1435.9,1424 1449.2,1432.2 1462.6,1432.5 1476,1410.8 1489.3,1407.2 1502.7,1410.5 1516.1,1406.5 1529.4,1406.5 1542.8,1415.5 1556.2,1421.5 1569.5,1412.8 1582.9,1412.8 1596.3,1412.8 1609.6,1412.8 1623,1416.8 1636.4,1424 1649.7,1434.2 1663.1,1434.2 1676.5,1410.5 1689.8,1410.5 1703.2,1410.5 1716.6,1410.5 1729.9,1428 1743.3,1428 1756.7,1360 1770,1407 1783.4,1411 1796.8,1406 1810.1,1384.8 1823.5,1400 1836.9,1403.8 1850.2,1369 1863.6,1369 1877,1399.8 1890.3,1364.5 1903.7,1402 1917.1,1402 1930.4,1371.2 1943.8,1381.2 1957.2,1381.2 1970.5,1381.2 1983.9,1402 1997.3,1391.8 2010.7,1401.2 2024,1391 2037.4,1402.5 2050.8,1390.2 2064.1,1390.2 2077.5,1390.2 2090.9,1390.2 2104.2,1390.2 2117.6,1402.5 2131,1402.5 2144.3,1388.5 2157.7,1401.2 2171.1,1401.2 2184.4,1401.2 2197.8,1385.8 2211.2,1385.8 2224.5,1401.2 2237.9,1386.2 2251.3,1400.5 2264.6,1397.5 2278,1385.5 2291.4,1385.5 2304.7,1385.5 2318.1,1385.5 2331.5,1338.8 2344.8,1325.5 2358.2,1342 2371.6,1405 2384.9,1405 2398.3,1357.5 2411.7,1400.5 2425,1369.5 2438.4,1399.2 2451.8,1375 2465.1,1375 2478.5,1375 2491.9,1371.2 2505.2,1376.2 2518.6,1381.2 2532,1405 2545.3,1405 2558.7,1384.5 2572.1,1380.5 2585.4,1380.5 2598.8,1385.5 2612.2,1385.5 2625.5,1391 2638.9,1409.2 2652.3,1381.5 2665.6,1386 2679,1386 2692.4,1386 2705.7,1386 2719.1,1376 2732.5,1371 2745.8,1371 2759.2,1371 2772.6,1371 2785.9,1379.2 2799.3,1372.5 2812.7,1420.8 2826,1415 2839.4,1377 2852.8,1382.5 2866.1,1373.2 2879.5,1410 2892.9,1381.8 2906.2,1406.2 2919.6,1380.5 2933,1375.5 2946.3,1404.2 2959.7,1378.8 2973.1,1378.8 2986.4,1384 2999.8,1386.8 3013.2,1405.5 3026.5,1386.5 3039.9,1403.8 3053.3,1386.5 3066.6,1389 3080,1389.2 3093.4,1389 3106.7,1404.5 3120.1,1386 3133.5,1388.5 3146.8,1404.2 3160.2,1404.2 3173.6,1382.5 3186.9,1385 3200.3,1402.8 3213.7,1403 3227,1402.8 3240.4,1385 3253.8,1385 3267.1,1388.2 3280.5,1385.2 3293.9,1388.5 3307.2,1388.5 3320.6,1385 3334,1389.2 3347.3,1385 3360.7,1389.8 3374.1,1385 3387.5,1380.5 3400.8,1380.5 3414.2,1381.2 3427.6,1371.8 3440.9,1371.8 3454.3,1378.2 3467.7,1378" fill="none" stroke="#e6e6e6" stroke-width="1.1" stroke-linejoin="round"/>
<rect x="-1.2" y="1603.3" width="10.7" height="80.2" fill="#8a0e0e"/>
<rect x="12.2" y="1620.2" width="10.7" height="63.3" fill="#8a0e0e"/>
<rect x="25.6" y="1645.5" width="10.7" height="38" fill="#8a0e0e"/>
<rect x="38.9" y="1652.2" width="10.7" height="31.2" fill="#8a0e0e"/>
<rect x="52.3" y="1658.8" width="10.7" height="24.7" fill="#8a0e0e"/>
<rect x="65.7" y="1671.3" width="10.7" height="12.2" fill="#8a0e0e"/>
<rect x="79" y="1676.5" width="10.7" height="7" fill="#8a0e0e"/>
<rect x="92.4" y="1683.5" width="10.7" height="2.7" fill="#8a0e0e"/>
<rect x="105.8" y="1683.5" width="10.7" height="7" fill="#8a0e0e"/>
<rect x="119.1" y="1683.5" width="10.7" height="18" fill="#8a0e0e"/>
<rect x="132.5" y="1683.5" width="10.7" height="24.2" fill="#8a0e0e"/>
<rect x="145.9" y="1683.5" width="10.7" height="27.2" fill="#8a0e0e"/>
<rect x="159.2" y="1683.5" width="10.7" height="50" fill="#8a0e0e"/>
<rect x="172.6" y="1683.5" width="10.7" height="63" fill="#8a0e0e"/>
<rect x="186" y="1683.5" width="10.7" height="61.1" fill="#0e7c0e"/>
<rect x="199.3" y="1683.5" width="10.7" height="63" fill="#8a0e0e"/>
<rect x="212.7" y="1683.5" width="10.7" height="65" fill="#8a0e0e"/>
<rect x="226.1" y="1683.5" width="10.7" height="63.9" fill="#0e7c0e"/>
<rect x="239.4" y="1683.5" width="10.7" height="61" fill="#0e7c0e"/>
<rect x="252.8" y="1683.5" width="10.7" height="60" fill="#0e7c0e"/>
<rect x="266.2" y="1683.5" width="10.7" height="55" fill="#0e7c0e"/>
<rect x="279.5" y="1683.5" width="10.7" height="51" fill="#0e7c0e"/>
<rect x="292.9" y="1683.5" width="10.7" height="45" fill="#0e7c0e"/>
<rect x="306.3" y="1683.5" width="10.7" height="38.3" fill="#0e7c0e"/>
<rect x="319.6" y="1683.5" width="10.7" height="33" fill="#0e7c0e"/>
<rect x="333" y="1683.5" width="10.7" height="23" fill="#0e7c0e"/>
<rect x="346.4" y="1683.5" width="10.7" height="15" fill="#0e7c0e"/>
<rect x="359.7" y="1683.5" width="10.7" height="7.9" fill="#0e7c0e"/>
<rect x="373.1" y="1679.2" width="10.7" height="4.3" fill="#0e7c0e"/>
<rect x="386.5" y="1668.3" width="10.7" height="15.2" fill="#0e7c0e"/>
<rect x="399.8" y="1666.5" width="10.7" height="17" fill="#0e7c0e"/>
<rect x="413.2" y="1657.1" width="10.7" height="26.4" fill="#0e7c0e"/>
<rect x="426.6" y="1659.3" width="10.7" height="24.2" fill="#8a0e0e"/>
<rect x="439.9" y="1663.5" width="10.7" height="20" fill="#8a0e0e"/>
<rect x="453.3" y="1661.2" width="10.7" height="22.3" fill="#0e7c0e"/>
<rect x="466.7" y="1659.3" width="10.7" height="24.2" fill="#0e7c0e"/>
<rect x="480" y="1655.2" width="10.7" height="28.3" fill="#0e7c0e"/>
<rect x="493.4" y="1654.2" width="10.7" height="29.3" fill="#0e7c0e"/>
<rect x="506.8" y="1651.2" width="10.7" height="32.3" fill="#0e7c0e"/>
<rect x="520.1" y="1651.2" width="10.7" height="32.3" fill="#0e7c0e"/>
<rect x="533.5" y="1655.2" width="10.7" height="28.3" fill="#8a0e0e"/>
<rect x="546.9" y="1655.2" width="10.7" height="28.3" fill="#0e7c0e"/>
<rect x="560.2" y="1653.3" width="10.7" height="30.2" fill="#0e7c0e"/>
<rect x="573.6" y="1652.2" width="10.7" height="31.2" fill="#0e7c0e"/>
<rect x="587" y="1656.3" width="10.7" height="27.2" fill="#8a0e0e"/>
<rect x="600.3" y="1659.3" width="10.7" height="24.2" fill="#8a0e0e"/>
<rect x="613.7" y="1662.3" width="10.7" height="21.2" fill="#8a0e0e"/>
<rect x="627.1" y="1667.2" width="10.7" height="16.3" fill="#8a0e0e"/>
<rect x="640.4" y="1670.2" width="10.7" height="13.3" fill="#8a0e0e"/>
<rect x="653.8" y="1672.4" width="10.7" height="11.1" fill="#8a0e0e"/>
<rect x="667.2" y="1668.3" width="10.7" height="15.2" fill="#0e7c0e"/>
<rect x="680.5" y="1667.2" width="10.7" height="16.3" fill="#0e7c0e"/>
<rect x="693.9" y="1666.4" width="10.7" height="17.1" fill="#0e7c0e"/>
<rect x="707.3" y="1666.4" width="10.7" height="17.1" fill="#0e7c0e"/>
<rect x="720.6" y="1663.4" width="10.7" height="20.1" fill="#0e7c0e"/>
<rect x="734" y="1658.2" width="10.7" height="25.3" fill="#0e7c0e"/>
<rect x="747.4" y="1636.5" width="10.7" height="47" fill="#0e7c0e"/>
<rect x="760.7" y="1623.5" width="10.7" height="60" fill="#0e7c0e"/>
<rect x="774.1" y="1618.3" width="10.7" height="65.2" fill="#0e7c0e"/>
<rect x="787.5" y="1627.5" width="10.7" height="56" fill="#8a0e0e"/>
<rect x="800.8" y="1631.3" width="10.7" height="52.2" fill="#8a0e0e"/>
<rect x="814.2" y="1637.6" width="10.7" height="45.9" fill="#8a0e0e"/>
<rect x="827.6" y="1642.5" width="10.7" height="41" fill="#8a0e0e"/>
<rect x="840.9" y="1654.5" width="10.7" height="29" fill="#8a0e0e"/>
<rect x="854.3" y="1663.4" width="10.7" height="20.1" fill="#8a0e0e"/>
<rect x="867.7" y="1674.5" width="10.7" height="9" fill="#8a0e0e"/>
<rect x="881" y="1683.5" width="10.7" height="10.9" fill="#8a0e0e"/>
<rect x="894.4" y="1683.5" width="10.7" height="20.9" fill="#8a0e0e"/>
<rect x="907.8" y="1683.5" width="10.7" height="22.3" fill="#8a0e0e"/>
<rect x="921.1" y="1683.5" width="10.7" height="24.2" fill="#8a0e0e"/>
<rect x="934.5" y="1683.5" width="10.7" height="20.1" fill="#0e7c0e"/>
<rect x="947.9" y="1683.5" width="10.7" height="19" fill="#0e7c0e"/>
<rect x="961.2" y="1683.5" width="10.7" height="19" fill="#8a0e0e"/>
<rect x="974.6" y="1683.5" width="10.7" height="17.9" fill="#0e7c0e"/>
<rect x="988" y="1683.5" width="10.7" height="17.1" fill="#0e7c0e"/>
<rect x="1001.3" y="1683.5" width="10.7" height="19" fill="#8a0e0e"/>
<rect x="1014.7" y="1683.5" width="10.7" height="16" fill="#0e7c0e"/>
<rect x="1028.1" y="1683.5" width="10.7" height="14.1" fill="#0e7c0e"/>
<rect x="1041.4" y="1683.5" width="10.7" height="1.4" fill="#0e7c0e"/>
<rect x="1054.8" y="1675.3" width="10.7" height="8.2" fill="#0e7c0e"/>
<rect x="1068.2" y="1675.3" width="10.7" height="8.2" fill="#8a0e0e"/>
<rect x="1081.5" y="1681.6" width="10.7" height="1.9" fill="#8a0e0e"/>
<rect x="1094.9" y="1673.5" width="10.7" height="10" fill="#0e7c0e"/>
<rect x="1108.3" y="1683.5" width="10.7" height="2.2" fill="#8a0e0e"/>
<rect x="1121.6" y="1683.5" width="10.7" height="13.3" fill="#8a0e0e"/>
<rect x="1135" y="1683.5" width="10.7" height="16" fill="#8a0e0e"/>
<rect x="1148.4" y="1683.5" width="10.7" height="21.2" fill="#8a0e0e"/>
<rect x="1161.7" y="1683.5" width="10.7" height="27.2" fill="#8a0e0e"/>
<rect x="1175.1" y="1683.5" width="10.7" height="40" fill="#8a0e0e"/>
<rect x="1188.5" y="1683.5" width="10.7" height="44" fill="#8a0e0e"/>
<rect x="1201.9" y="1683.5" width="10.7" height="44" fill="#0e7c0e"/>
<rect x="1215.2" y="1683.5" width="10.7" height="36.1" fill="#0e7c0e"/>
<rect x="1228.6" y="1683.5" width="10.7" height="34" fill="#0e7c0e"/>
<rect x="1242" y="1683.5" width="10.7" height="30.2" fill="#0e7c0e"/>
<rect x="1255.3" y="1683.5" width="10.7" height="29.1" fill="#0e7c0e"/>
<rect x="1268.7" y="1683.5" width="10.7" height="33.2" fill="#8a0e0e"/>
<rect x="1282.1" y="1683.5" width="10.7" height="34" fill="#8a0e0e"/>
<rect x="1295.4" y="1683.5" width="10.7" height="32.1" fill="#0e7c0e"/>
<rect x="1308.8" y="1683.5" width="10.7" height="23.1" fill="#0e7c0e"/>
<rect x="1322.2" y="1683.5" width="10.7" height="16" fill="#0e7c0e"/>
<rect x="1335.5" y="1683.5" width="10.7" height="12" fill="#0e7c0e"/>
<rect x="1348.9" y="1683.5" width="10.7" height="9" fill="#0e7c0e"/>
<rect x="1362.3" y="1683.5" width="10.7" height="6" fill="#0e7c0e"/>
<rect x="1375.6" y="1683.5" width="10.7" height="4.9" fill="#0e7c0e"/>
<rect x="1389" y="1683.5" width="10.7" height="1.9" fill="#0e7c0e"/>
<rect x="1402.4" y="1681.6" width="10.7" height="1.9" fill="#0e7c0e"/>
<rect x="1415.7" y="1674.5" width="10.7" height="9" fill="#0e7c0e"/>
<rect x="1429.1" y="1674.5" width="10.7" height="9" fill="#0e7c0e"/>
<rect x="1442.5" y="1676.5" width="10.7" height="7" fill="#8a0e0e"/>
<rect x="1455.8" y="1677.5" width="10.7" height="6" fill="#8a0e0e"/>
<rect x="1469.2" y="1672.4" width="10.7" height="11.1" fill="#0e7c0e"/>
<rect x="1482.6" y="1668.3" width="10.7" height="15.2" fill="#0e7c0e"/>
<rect x="1495.9" y="1666.4" width="10.7" height="17.1" fill="#0e7c0e"/>
<rect x="1509.3" y="1664.5" width="10.7" height="19" fill="#0e7c0e"/>
<rect x="1522.7" y="1663.4" width="10.7" height="20.1" fill="#0e7c0e"/>
<rect x="1536" y="1665.3" width="10.7" height="18.2" fill="#8a0e0e"/>
<rect x="1549.4" y="1668.3" width="10.7" height="15.2" fill="#8a0e0e"/>
<rect x="1562.8" y="1669.4" width="10.7" height="14.1" fill="#8a0e0e"/>
<rect x="1576.1" y="1669.4" width="10.7" height="14.1" fill="#8a0e0e"/>
<rect x="1589.5" y="1669.4" width="10.7" height="14.1" fill="#8a0e0e"/>
<rect x="1602.9" y="1670.5" width="10.7" height="13" fill="#8a0e0e"/>
<rect x="1616.2" y="1671.5" width="10.7" height="12" fill="#8a0e0e"/>
<rect x="1629.6" y="1673.5" width="10.7" height="10" fill="#8a0e0e"/>
<rect x="1643" y="1677.5" width="10.7" height="6" fill="#8a0e0e"/>
<rect x="1656.3" y="1680.5" width="10.7" height="3" fill="#8a0e0e"/>
<rect x="1669.7" y="1678.6" width="10.7" height="4.9" fill="#0e7c0e"/>
<rect x="1683.1" y="1676.5" width="10.7" height="7" fill="#0e7c0e"/>
<rect x="1696.4" y="1675.6" width="10.7" height="7.9" fill="#0e7c0e"/>
<rect x="1709.8" y="1674.5" width="10.7" height="9" fill="#0e7c0e"/>
<rect x="1723.2" y="1677.5" width="10.7" height="6" fill="#8a0e0e"/>
<rect x="1736.5" y="1679.5" width="10.7" height="4" fill="#8a0e0e"/>
<rect x="1749.9" y="1668.3" width="10.7" height="15.2" fill="#0e7c0e"/>
<rect x="1763.3" y="1672.4" width="10.7" height="11.1" fill="#8a0e0e"/>
<rect x="1776.6" y="1677.5" width="10.7" height="6" fill="#8a0e0e"/>
<rect x="1790" y="1678.6" width="10.7" height="4.9" fill="#8a0e0e"/>
<rect x="1803.4" y="1673.5" width="10.7" height="10" fill="#0e7c0e"/>
<rect x="1816.7" y="1675.6" width="10.7" height="7.9" fill="#8a0e0e"/>
<rect x="1830.1" y="1678.6" width="10.7" height="4.9" fill="#8a0e0e"/>
<rect x="1843.5" y="1668.3" width="10.7" height="15.2" fill="#0e7c0e"/>
<rect x="1856.8" y="1662.3" width="10.7" height="21.2" fill="#0e7c0e"/>
<rect x="1870.2" y="1670.5" width="10.7" height="13" fill="#8a0e0e"/>
<rect x="1883.6" y="1659.3" width="10.7" height="24.2" fill="#0e7c0e"/>
<rect x="1896.9" y="1672.4" width="10.7" height="11.1" fill="#8a0e0e"/>
<rect x="1910.3" y="1680.5" width="10.7" height="3" fill="#8a0e0e"/>
<rect x="1923.7" y="1667.5" width="10.7" height="16" fill="#0e7c0e"/>
<rect x="1937" y="1666.4" width="10.7" height="17.1" fill="#0e7c0e"/>
<rect x="1950.4" y="1666.4" width="10.7" height="17.1" fill="#0e7c0e"/>
<rect x="1963.8" y="1666.4" width="10.7" height="17.1" fill="#8a0e0e"/>
<rect x="1977.1" y="1679.5" width="10.7" height="4" fill="#8a0e0e"/>
<rect x="1990.5" y="1682.7" width="10.7" height="0.8" fill="#8a0e0e"/>
<rect x="2003.9" y="1683.5" width="10.7" height="6" fill="#8a0e0e"/>
<rect x="2017.2" y="1683.5" width="10.7" height="4.9" fill="#0e7c0e"/>
<rect x="2030.6" y="1683.5" width="10.7" height="10.9" fill="#8a0e0e"/>
<rect x="2044" y="1683.5" width="10.7" height="6.8" fill="#0e7c0e"/>
<rect x="2057.3" y="1683.5" width="10.7" height="2.7" fill="#0e7c0e"/>
<rect x="2070.7" y="1683.5" width="10.7" height="1.4" fill="#0e7c0e"/>
<rect x="2084.1" y="1683.5" width="10.7" height="0.8" fill="#0e7c0e"/>
<rect x="2110.8" y="1683.5" width="10.7" height="4.9" fill="#8a0e0e"/>
<rect x="2124.2" y="1683.5" width="10.7" height="7.9" fill="#8a0e0e"/>
<rect x="2137.5" y="1683.5" width="10.7" height="3.8" fill="#0e7c0e"/>
<rect x="2150.9" y="1683.5" width="10.7" height="6.8" fill="#8a0e0e"/>
<rect x="2164.3" y="1683.5" width="10.7" height="7.9" fill="#8a0e0e"/>
<rect x="2177.6" y="1683.5" width="10.7" height="7.9" fill="#8a0e0e"/>
<rect x="2191" y="1683.5" width="10.7" height="1.9" fill="#0e7c0e"/>
<rect x="2204.4" y="1681.6" width="10.7" height="1.9" fill="#0e7c0e"/>
<rect x="2217.7" y="1683.5" width="10.7" height="0.8" fill="#8a0e0e"/>
<rect x="2231.1" y="1680.5" width="10.7" height="3" fill="#0e7c0e"/>
<rect x="2257.8" y="1683.5" width="10.7" height="0.8" fill="#8a0e0e"/>
<rect x="2271.2" y="1680.5" width="10.7" height="3" fill="#0e7c0e"/>
<rect x="2284.6" y="1677.5" width="10.7" height="6" fill="#0e7c0e"/>
<rect x="2297.9" y="1676.5" width="10.7" height="7" fill="#0e7c0e"/>
<rect x="2311.3" y="1675.3" width="10.7" height="8.2" fill="#0e7c0e"/>
<rect x="2324.7" y="1652.5" width="10.7" height="31" fill="#0e7c0e"/>
<rect x="2338" y="1628.3" width="10.7" height="55.2" fill="#0e7c0e"/>
<rect x="2351.4" y="1622.4" width="10.7" height="61.1" fill="#0e7c0e"/>
<rect x="2364.8" y="1655.5" width="10.7" height="28" fill="#8a0e0e"/>
<rect x="2378.1" y="1678.6" width="10.7" height="4.9" fill="#8a0e0e"/>
<rect x="2391.5" y="1653.3" width="10.7" height="30.2" fill="#0e7c0e"/>
<rect x="2404.9" y="1679.5" width="10.7" height="4" fill="#8a0e0e"/>
<rect x="2418.2" y="1656.3" width="10.7" height="27.2" fill="#0e7c0e"/>
<rect x="2431.6" y="1683.5" width="10.7" height="0.5" fill="#8a0e0e"/>
<rect x="2445" y="1662.3" width="10.7" height="21.2" fill="#0e7c0e"/>
<rect x="2458.3" y="1649.3" width="10.7" height="34.2" fill="#0e7c0e"/>
<rect x="2471.7" y="1644.4" width="10.7" height="39.1" fill="#0e7c0e"/>
<rect x="2485.1" y="1637.3" width="10.7" height="46.2" fill="#0e7c0e"/>
<rect x="2498.4" y="1642.5" width="10.7" height="41" fill="#8a0e0e"/>
<rect x="2511.8" y="1654.5" width="10.7" height="29" fill="#8a0e0e"/>
<rect x="2525.2" y="1683.5" width="10.7" height="14.1" fill="#8a0e0e"/>
<rect x="2538.6" y="1683.5" width="10.7" height="41" fill="#8a0e0e"/>
<rect x="2551.9" y="1683.5" width="10.7" height="29" fill="#0e7c0e"/>
<rect x="2565.3" y="1683.5" width="10.7" height="15" fill="#0e7c0e"/>
<rect x="2578.7" y="1683.5" width="10.7" height="7" fill="#0e7c0e"/>
<rect x="2592" y="1683.5" width="10.7" height="7" fill="#8a0e0e"/>
<rect x="2605.4" y="1683.5" width="10.7" height="8.2" fill="#8a0e0e"/>
<rect x="2618.8" y="1683.5" width="10.7" height="14.1" fill="#8a0e0e"/>
<rect x="2632.1" y="1683.5" width="10.7" height="41" fill="#8a0e0e"/>
<rect x="2645.5" y="1683.5" width="10.7" height="22" fill="#0e7c0e"/>
<rect x="2658.9" y="1683.5" width="10.7" height="15" fill="#0e7c0e"/>
<rect x="2672.2" y="1683.5" width="10.7" height="10" fill="#0e7c0e"/>
<rect x="2685.6" y="1683.5" width="10.7" height="7" fill="#0e7c0e"/>
<rect x="2699" y="1683.5" width="10.7" height="4.9" fill="#0e7c0e"/>
<rect x="2712.3" y="1676.5" width="10.7" height="7" fill="#0e7c0e"/>
<rect x="2725.7" y="1663.4" width="10.7" height="20.1" fill="#0e7c0e"/>
<rect x="2739.1" y="1656.3" width="10.7" height="27.2" fill="#0e7c0e"/>
<rect x="2752.4" y="1654.5" width="10.7" height="29" fill="#0e7c0e"/>
<rect x="2765.8" y="1655.5" width="10.7" height="28" fill="#8a0e0e"/>
<rect x="2779.2" y="1663.4" width="10.7" height="20.1" fill="#8a0e0e"/>
<rect x="2792.5" y="1664.5" width="10.7" height="19" fill="#8a0e0e"/>
<rect x="2805.9" y="1683.5" width="10.7" height="29" fill="#8a0e0e"/>
<rect x="2819.3" y="1683.5" width="10.7" height="54" fill="#8a0e0e"/>
<rect x="2832.6" y="1683.5" width="10.7" height="26" fill="#0e7c0e"/>
<rect x="2846" y="1683.5" width="10.7" height="13" fill="#0e7c0e"/>
<rect x="2859.4" y="1677.5" width="10.7" height="6" fill="#0e7c0e"/>
<rect x="2872.7" y="1683.5" width="10.7" height="30.2" fill="#8a0e0e"/>
<rect x="2886.1" y="1683.5" width="10.7" height="10" fill="#0e7c0e"/>
<rect x="2899.5" y="1683.5" width="10.7" height="40" fill="#8a0e0e"/>
<rect x="2912.8" y="1683.5" width="10.7" height="8.2" fill="#0e7c0e"/>
<rect x="2926.2" y="1659.3" width="10.7" height="24.2" fill="#0e7c0e"/>
<rect x="2939.6" y="1683.5" width="10.7" height="17.9" fill="#8a0e0e"/>
<rect x="2952.9" y="1667.5" width="10.7" height="16" fill="#0e7c0e"/>
<rect x="2966.3" y="1646.3" width="10.7" height="37.2" fill="#0e7c0e"/>
<rect x="2979.7" y="1647.4" width="10.7" height="36.1" fill="#8a0e0e"/>
<rect x="2993" y="1655.2" width="10.7" height="28.3" fill="#8a0e0e"/>
<rect x="3006.4" y="1683.5" width="10.7" height="23.1" fill="#8a0e0e"/>
<rect x="3019.8" y="1683.5" width="10.7" height="11.1" fill="#0e7c0e"/>
<rect x="3033.1" y="1683.5" width="10.7" height="47" fill="#8a0e0e"/>
<rect x="3046.5" y="1683.5" width="10.7" height="23.9" fill="#0e7c0e"/>
<rect x="3059.9" y="1683.5" width="10.7" height="13" fill="#0e7c0e"/>
<rect x="3073.2" y="1683.5" width="10.7" height="7" fill="#0e7c0e"/>
<rect x="3086.6" y="1683.5" width="10.7" height="1.9" fill="#0e7c0e"/>
<rect x="3100" y="1683.5" width="10.7" height="37" fill="#8a0e0e"/>
<rect x="3113.3" y="1683.5" width="10.7" height="14.1" fill="#0e7c0e"/>
<rect x="3126.7" y="1683.5" width="10.7" height="3.8" fill="#0e7c0e"/>
<rect x="3140.1" y="1683.5" width="10.7" height="37" fill="#8a0e0e"/>
<rect x="3153.4" y="1683.5" width="10.7" height="56" fill="#8a0e0e"/>
<rect x="3166.8" y="1683.5" width="10.7" height="14.1" fill="#0e7c0e"/>
<rect x="3180.2" y="1676.5" width="10.7" height="7" fill="#0e7c0e"/>
<rect x="3193.5" y="1683.5" width="10.7" height="23.1" fill="#8a0e0e"/>
<rect x="3206.9" y="1683.5" width="10.7" height="40" fill="#8a0e0e"/>
<rect x="3220.3" y="1683.5" width="10.7" height="48.9" fill="#8a0e0e"/>
<rect x="3233.6" y="1683.5" width="10.7" height="14.1" fill="#0e7c0e"/>
<rect x="3247" y="1674.5" width="10.7" height="9" fill="#0e7c0e"/>
<rect x="3260.4" y="1665.3" width="10.7" height="18.2" fill="#0e7c0e"/>
<rect x="3273.7" y="1654.5" width="10.7" height="29" fill="#0e7c0e"/>
<rect x="3287.1" y="1654.5" width="10.7" height="29" fill="#8a0e0e"/>
<rect x="3300.5" y="1656.3" width="10.7" height="27.2" fill="#8a0e0e"/>
<rect x="3313.8" y="1652.5" width="10.7" height="31" fill="#0e7c0e"/>
<rect x="3327.2" y="1657.5" width="10.7" height="26" fill="#8a0e0e"/>
<rect x="3340.6" y="1656.3" width="10.7" height="27.2" fill="#0e7c0e"/>
<rect x="3353.9" y="1662.3" width="10.7" height="21.2" fill="#8a0e0e"/>
<rect x="3367.3" y="1661.5" width="10.7" height="22" fill="#0e7c0e"/>
<rect x="3380.7" y="1657.5" width="10.7" height="26" fill="#0e7c0e"/>
<rect x="3394" y="1655.5" width="10.7" height="28" fill="#0e7c0e"/>
<rect x="3407.4" y="1656.3" width="10.7" height="27.2" fill="#8a0e0e"/>
<rect x="3420.8" y="1647.4" width="10.7" height="36.1" fill="#0e7c0e"/>
<rect x="3434.1" y="1643.5" width="10.7" height="40" fill="#0e7c0e"/>
<rect x="3447.5" y="1649.5" width="10.7" height="34" fill="#8a0e0e"/>
<rect x="3460.9" y="1655.5" width="10.7" height="28" fill="#8a0e0e"/>
<line x1="0" y1="1683.5" x2="3475" y2="1683.5" stroke="#c0c0c0" stroke-width="1.1"/>
<polyline points="0,1706 5.6,1700 19,1682.2 32.3,1672.7 45.7,1665.1 59.1,1659.6 72.4,1656.4 85.8,1655 99.2,1655.6 112.5,1657.5 125.9,1662.4 139.3,1668.6 152.6,1675.4 166,1687.6 179.4,1704.5 192.7,1720.2 206.1,1736.3 219.5,1752.8 232.8,1768.3 246.2,1784.1 259.6,1798.8 272.9,1812.4 286.3,1825.4 299.7,1836.3 313,1845.8 326.4,1853.9 339.8,1859.9 353.1,1864 366.5,1866.2 379.9,1865.3 393.2,1862.1 406.6,1858 420,1851.2 433.3,1845 446.7,1839.8 460.1,1834.4 473.4,1828.9 486.8,1822.1 500.2,1815.1 513.5,1806.9 526.9,1799 540.3,1792.3 553.6,1785.2 567,1777.8 580.4,1770.2 593.7,1763.7 607.1,1757.5 620.5,1752 633.8,1748 647.2,1745.2 660.6,1742.5 674,1738.4 687.3,1734.4 700.7,1731.1 714.1,1727 727.4,1722.1 740.8,1716.2 754.2,1704.5 767.5,1688.7 780.9,1671.9 794.3,1658.3 807.6,1646 821,1635.2 834.4,1625.1 847.7,1617.5 861.1,1612.9 874.5,1611 887.8,1613.7 901.2,1618.9 914.6,1624.3 927.9,1630.6 941.3,1635.7 954.7,1640.6 968,1645.5 981.4,1650.1 994.8,1654.8 1008.1,1659.6 1021.5,1663.7 1034.9,1667.3 1048.2,1667.5 1061.6,1665.6 1075,1663.7 1088.3,1663.2 1101.7,1660.7 1115.1,1661.3 1128.4,1664.5 1141.8,1668.6 1155.2,1674 1168.5,1681.4 1181.9,1692.3 1195.3,1703.7 1208.6,1714.8 1222,1723.5 1235.4,1731.7 1248.7,1739.3 1262.1,1746.6 1275.5,1754.8 1288.8,1763.5 1302.2,1771.6 1315.6,1777.3 1328.9,1781.4 1342.3,1784.6 1355.7,1787.4 1369,1789 1382.4,1790.3 1395.8,1790.9 1409.1,1789.3 1422.5,1787.4 1435.9,1786 1449.2,1784.6 1462.6,1783.3 1476,1780.6 1489.3,1777 1502.7,1772.4 1516.1,1767.5 1529.4,1762.9 1542.8,1758.8 1556.2,1755.6 1569.5,1752 1582.9,1748.5 1596.3,1745.2 1609.6,1742 1623,1739 1636.4,1737.1 1649.7,1735.7 1663.1,1735.2 1676.5,1733.6 1689.8,1731.7 1703.2,1729.8 1716.6,1727.8 1729.9,1726.8 1743.3,1725.4 1756.7,1722.1 1770,1719.7 1783.4,1718.1 1796.8,1717 1810.1,1714.5 1823.5,1712.9 1836.9,1711.5 1850.2,1707.7 1863.6,1702.6 1877,1699 1890.3,1693.6 1903.7,1690.9 1917.1,1690.3 1930.4,1686.3 1943.8,1682.2 1957.2,1678.1 1970.5,1673.8 1983.9,1673 1997.3,1672.7 2010.7,1674.6 2024,1675.9 2037.4,1678.7 2050.8,1680.6 2064.1,1681.9 2077.5,1682.7 2090.9,1683.3 2104.2,1683.6 2117.6,1685.5 2131,1687.1 2144.3,1688.7 2157.7,1690.3 2171.1,1692.3 2184.4,1693.6 2197.8,1694.2 2211.2,1693.6 2224.5,1694.2 2237.9,1693.6 2251.3,1694.2 2264.6,1694.4 2278,1693.6 2291.4,1692.5 2304.7,1690.9 2318.1,1689 2331.5,1681.4 2344.8,1667.8 2358.2,1652.3 2371.6,1646 2384.9,1644.7 2398.3,1637.6 2411.7,1636.8 2425,1630.3 2438.4,1630.6 2451.8,1625.1 2465.1,1617 2478.5,1607.2 2491.9,1596.3 2505.2,1586.3 2518.6,1578.9 2532,1582.7 2545.3,1593.1 2558.7,1600.4 2572.1,1604.2 2585.4,1606.1 2598.8,1608 2612.2,1609.9 2625.5,1613.7 2638.9,1624 2652.3,1629.5 2665.6,1633.3 2679,1636 2692.4,1637.9 2705.7,1639 2719.1,1637.4 2732.5,1632.5 2745.8,1625.7 2759.2,1618.9 2772.6,1612.1 2785.9,1607.2 2799.3,1602.6 2812.7,1609.9 2826,1623.5 2839.4,1630 2852.8,1633.3 2866.1,1631.9 2879.5,1639.5 2892.9,1642 2906.2,1652.3 2919.6,1654.5 2933,1648.5 2946.3,1653.1 2959.7,1649 2973.1,1639.8 2986.4,1631.1 2999.8,1624.9 3013.2,1630.6 3026.5,1633.3 3039.9,1645.5 3053.3,1651.8 3066.6,1654.8 3080,1656.4 3093.4,1657.2 3106.7,1667 3120.1,1670.2 3133.5,1671.3 3146.8,1681.7 3160.2,1695.5 3173.6,1698.5 3186.9,1697.4 3200.3,1702.8 3213.7,1712.9 3227,1725.7 3240.4,1729.2 3253.8,1727 3267.1,1722.7 3280.5,1715.3 3293.9,1708.3 3307.2,1701.2 3320.6,1693.6 3334,1687.1 3347.3,1680.3 3360.7,1675.1 3374.1,1669.7 3387.5,1663.2 3400.8,1656.4 3414.2,1650.1 3427.6,1640.9 3440.9,1631.7 3454.3,1623.5 3467.7,1617" fill="none" stroke="#e00a0a" stroke-width="1.2" stroke-linejoin="round"/>
<polyline points="0,1620.8 5.6,1619.8 19,1618.9 32.3,1634.7 45.7,1633.8 59.1,1634.9 72.4,1644.2 85.8,1648 99.2,1658.3 112.5,1664.5 125.9,1680.4 139.3,1692.8 152.6,1702.6 166,1737.6 179.4,1767.5 192.7,1781.3 206.1,1799.3 219.5,1817.8 232.8,1832.2 246.2,1845.1 259.6,1858.8 272.9,1867.4 286.3,1876.4 299.7,1881.3 313,1884.1 326.4,1886.9 339.8,1882.9 353.1,1879 366.5,1874.1 379.9,1861 393.2,1846.9 406.6,1841 420,1824.8 433.3,1820.8 446.7,1819.8 460.1,1812.1 473.4,1804.7 486.8,1793.8 500.2,1785.8 513.5,1774.6 526.9,1766.7 540.3,1764 553.6,1756.9 567,1747.6 580.4,1739 593.7,1736.5 607.1,1733.3 620.5,1730.8 633.8,1731.7 647.2,1731.9 660.6,1731.4 674,1723.2 687.3,1718.1 700.7,1714 714.1,1709.9 727.4,1702 740.8,1690.9 754.2,1657.5 767.5,1628.7 780.9,1606.7 794.3,1602.3 807.6,1593.8 821,1589.3 834.4,1584.1 847.7,1588.5 861.1,1592.8 874.5,1602 887.8,1624.6 901.2,1639.8 914.6,1646.6 927.9,1654.8 941.3,1655.8 954.7,1659.6 968,1664.5 981.4,1668 994.8,1671.9 1008.1,1678.6 1021.5,1679.7 1034.9,1681.4 1048.2,1668.9 1061.6,1657.4 1075,1655.5 1088.3,1661.3 1101.7,1650.7 1115.1,1663.5 1128.4,1677.8 1141.8,1684.6 1155.2,1695.2 1168.5,1708.6 1181.9,1732.3 1195.3,1747.7 1208.6,1758.8 1222,1759.6 1235.4,1765.7 1248.7,1769.5 1262.1,1775.7 1275.5,1788 1288.8,1797.5 1302.2,1803.7 1315.6,1800.4 1328.9,1797.4 1342.3,1796.6 1355.7,1796.4 1369,1795 1382.4,1795.2 1395.8,1792.8 1409.1,1787.4 1422.5,1778.4 1435.9,1777 1449.2,1777.6 1462.6,1777.3 1476,1769.5 1489.3,1761.8 1502.7,1755.3 1516.1,1748.5 1529.4,1742.8 1542.8,1740.6 1556.2,1740.4 1569.5,1737.9 1582.9,1734.4 1596.3,1731.1 1609.6,1729 1623,1727 1636.4,1727.1 1649.7,1729.7 1663.1,1732.2 1676.5,1728.7 1689.8,1724.7 1703.2,1721.9 1716.6,1718.8 1729.9,1720.8 1743.3,1721.4 1756.7,1706.9 1770,1708.6 1783.4,1712.1 1796.8,1712.1 1810.1,1704.5 1823.5,1705 1836.9,1706.6 1850.2,1692.5 1863.6,1681.4 1877,1686 1890.3,1669.4 1903.7,1679.8 1917.1,1687.3 1930.4,1670.3 1943.8,1665.1 1957.2,1661 1970.5,1656.7 1983.9,1669 1997.3,1671.9 2010.7,1680.6 2024,1680.8 2037.4,1689.6 2050.8,1687.4 2064.1,1684.6 2077.5,1684.1 2090.9,1684.1 2104.2,1683.6 2117.6,1690.4 2131,1695 2144.3,1692.5 2157.7,1697.1 2171.1,1700.2 2184.4,1701.5 2197.8,1696.1 2211.2,1691.7 2224.5,1695 2237.9,1690.6 2251.3,1694.2 2264.6,1695.2 2278,1690.6 2291.4,1686.5 2304.7,1683.9 2318.1,1680.8 2331.5,1650.4 2344.8,1612.6 2358.2,1591.2 2371.6,1618 2384.9,1639.8 2398.3,1607.4 2411.7,1632.8 2425,1603.1 2438.4,1631.1 2451.8,1603.9 2465.1,1582.8 2478.5,1568.1 2491.9,1550.1 2505.2,1545.3 2518.6,1549.9 2532,1596.8 2545.3,1634.1 2558.7,1629.4 2572.1,1619.2 2585.4,1613.1 2598.8,1615 2612.2,1618.1 2625.5,1627.8 2638.9,1665 2652.3,1651.5 2665.6,1648.3 2679,1646 2692.4,1644.9 2705.7,1643.9 2719.1,1630.4 2732.5,1612.4 2745.8,1598.5 2759.2,1589.9 2772.6,1584.1 2785.9,1587.1 2799.3,1583.6 2812.7,1638.9 2826,1677.5 2839.4,1656 2852.8,1646.3 2866.1,1625.9 2879.5,1669.7 2892.9,1652 2906.2,1692.3 2919.6,1662.7 2933,1624.3 2946.3,1671 2959.7,1633 2973.1,1602.6 2986.4,1595 2999.8,1596.6 3013.2,1653.7 3026.5,1644.4 3039.9,1692.5 3053.3,1675.7 3066.6,1667.8 3080,1663.4 3093.4,1659.1 3106.7,1704 3120.1,1684.3 3133.5,1675.1 3146.8,1718.7 3160.2,1751.5 3173.6,1712.6 3186.9,1690.4 3200.3,1725.9 3213.7,1752.9 3227,1774.6 3240.4,1743.3 3253.8,1718 3267.1,1704.5 3280.5,1686.3 3293.9,1679.3 3307.2,1674 3320.6,1662.6 3334,1661.1 3347.3,1653.1 3360.7,1653.9 3374.1,1647.7 3387.5,1637.2 3400.8,1628.4 3414.2,1622.9 3427.6,1604.8 3440.9,1591.7 3454.3,1589.5 3467.7,1589" fill="none" stroke="#ededed" stroke-width="1.1" stroke-linejoin="round"/>
<line x1="3475.5" y1="88" x2="3475.5" y2="1898" stroke="#a9adb3" stroke-width="1.2"/>
<line x1="0" y1="1898.5" x2="3519" y2="1898.5" stroke="#a9adb3" stroke-width="1.5"/>
<line x1="92.5" y1="1898" x2="92.5" y2="1904" stroke="#a9adb3" stroke-width="1.3"/>
<line x1="266.5" y1="1898" x2="266.5" y2="1904" stroke="#a9adb3" stroke-width="1.3"/>
<line x1="453.5" y1="1898" x2="453.5" y2="1904" stroke="#a9adb3" stroke-width="1.3"/>
<line x1="627.5" y1="1898" x2="627.5" y2="1904" stroke="#a9adb3" stroke-width="1.3"/>
<line x1="627.5" y1="1907" x2="627.5" y2="1917" stroke="#a9adb3" stroke-width="1" stroke-dasharray="1.500 2"/>
<line x1="800.5" y1="1898" x2="800.5" y2="1904" stroke="#a9adb3" stroke-width="1.3"/>
<line x1="974.5" y1="1898" x2="974.5" y2="1904" stroke="#a9adb3" stroke-width="1.3"/>
<line x1="1148.5" y1="1898" x2="1148.5" y2="1904" stroke="#a9adb3" stroke-width="1.3"/>
<line x1="1322.5" y1="1898" x2="1322.5" y2="1904" stroke="#a9adb3" stroke-width="1.3"/>
<line x1="1322.5" y1="1907" x2="1322.5" y2="1917" stroke="#a9adb3" stroke-width="1" stroke-dasharray="1.500 2"/>
<line x1="1495.5" y1="1898" x2="1495.5" y2="1904" stroke="#a9adb3" stroke-width="1.3"/>
<line x1="1669.5" y1="1898" x2="1669.5" y2="1904" stroke="#a9adb3" stroke-width="1.3"/>
<line x1="1843.5" y1="1898" x2="1843.5" y2="1904" stroke="#a9adb3" stroke-width="1.3"/>
<line x1="2017.5" y1="1898" x2="2017.5" y2="1904" stroke="#a9adb3" stroke-width="1.3"/>
<line x1="2017.5" y1="1907" x2="2017.5" y2="1917" stroke="#a9adb3" stroke-width="1" stroke-dasharray="1.500 2"/>
<line x1="2190.5" y1="1898" x2="2190.5" y2="1904" stroke="#a9adb3" stroke-width="1.3"/>
<line x1="2364.5" y1="1898" x2="2364.5" y2="1904" stroke="#a9adb3" stroke-width="1.3"/>
<line x1="2538.5" y1="1898" x2="2538.5" y2="1904" stroke="#a9adb3" stroke-width="1.3"/>
<line x1="2712.5" y1="1898" x2="2712.5" y2="1904" stroke="#a9adb3" stroke-width="1.3"/>
<line x1="2712.5" y1="1907" x2="2712.5" y2="1917" stroke="#a9adb3" stroke-width="1" stroke-dasharray="1.500 2"/>
<line x1="2885.5" y1="1898" x2="2885.5" y2="1904" stroke="#a9adb3" stroke-width="1.3"/>
<line x1="3059.5" y1="1898" x2="3059.5" y2="1904" stroke="#a9adb3" stroke-width="1.3"/>
<line x1="3233.5" y1="1898" x2="3233.5" y2="1904" stroke="#a9adb3" stroke-width="1.3"/>
<line x1="3407.5" y1="1898" x2="3407.5" y2="1904" stroke="#a9adb3" stroke-width="1.3"/>
<line x1="3407.5" y1="1907" x2="3407.5" y2="1917" stroke="#a9adb3" stroke-width="1" stroke-dasharray="1.500 2"/>
<line x1="3476" y1="336.5" x2="3480" y2="336.5" stroke="#a9adb3" stroke-width="1.2"/>
<line x1="3476" y1="847.5" x2="3480" y2="847.5" stroke="#a9adb3" stroke-width="1.2"/>
<line x1="3476" y1="1103" x2="3480" y2="1103" stroke="#a9adb3" stroke-width="1.2"/>
<line x1="3476" y1="1309.5" x2="3480" y2="1309.5" stroke="#a9adb3" stroke-width="1.2"/>
<line x1="3476" y1="1472.5" x2="3480" y2="1472.5" stroke="#a9adb3" stroke-width="1.2"/>
<line x1="3476" y1="1556.9" x2="3480" y2="1556.9" stroke="#a9adb3" stroke-width="1.2"/>
<line x1="3476" y1="1574.8" x2="3480" y2="1574.8" stroke="#a9adb3" stroke-width="1.2"/>
<line x1="3476" y1="1592.7" x2="3480" y2="1592.7" stroke="#a9adb3" stroke-width="1.2"/>
<line x1="3476" y1="1610.6" x2="3480" y2="1610.6" stroke="#a9adb3" stroke-width="1.2"/>
<line x1="3476" y1="1628.5" x2="3480" y2="1628.5" stroke="#a9adb3" stroke-width="1.2"/>
<line x1="3476" y1="1646.4" x2="3480" y2="1646.4" stroke="#a9adb3" stroke-width="1.2"/>
<line x1="3476" y1="1664.3" x2="3480" y2="1664.3" stroke="#a9adb3" stroke-width="1.2"/>
<line x1="3476" y1="1682.2" x2="3480" y2="1682.2" stroke="#a9adb3" stroke-width="1.2"/>
<line x1="3476" y1="1700.1" x2="3480" y2="1700.1" stroke="#a9adb3" stroke-width="1.2"/>
<line x1="3476" y1="1718" x2="3480" y2="1718" stroke="#a9adb3" stroke-width="1.2"/>
<line x1="3476" y1="1735.9" x2="3480" y2="1735.9" stroke="#a9adb3" stroke-width="1.2"/>
<line x1="3476" y1="1753.8" x2="3480" y2="1753.8" stroke="#a9adb3" stroke-width="1.2"/>
<line x1="3476" y1="1771.7" x2="3480" y2="1771.7" stroke="#a9adb3" stroke-width="1.2"/>
<line x1="3476" y1="1789.6" x2="3480" y2="1789.6" stroke="#a9adb3" stroke-width="1.2"/>
<line x1="3476" y1="1807.5" x2="3480" y2="1807.5" stroke="#a9adb3" stroke-width="1.2"/>
<line x1="3476" y1="1825.4" x2="3480" y2="1825.4" stroke="#a9adb3" stroke-width="1.2"/>
<line x1="3476" y1="1843.3" x2="3480" y2="1843.3" stroke="#a9adb3" stroke-width="1.2"/>
<line x1="3476" y1="1861.2" x2="3480" y2="1861.2" stroke="#a9adb3" stroke-width="1.2"/>
<line x1="3476" y1="1879.1" x2="3480" y2="1879.1" stroke="#a9adb3" stroke-width="1.2"/>
</svg>
<div class="abs" style="left:0;top:88px;width:1.3px;height:1849px;background:#1a62d6"></div>
<div class="abs" style="left:3519px;top:88px;width:1.2px;height:1849px;background:#1a62d6"></div>

<div class="lbl" style="top:112.5px;width:253px;height:17px;line-height:17px;background:rgba(30,33,39,0.85);letter-spacing:-0.5px">O:0.01&nbsp; H:0.01&nbsp; L:0.00&nbsp; C:0.00&nbsp; V:295k</div>
<div class="lbl" style="top:146px;width:144px;left:9px;height:23.5px;line-height:23.5px;letter-spacing:-0.2px">vol undr&nbsp; 295,000.00</div>
<div class="lbl" style="top:178px;width:127px;left:9px;height:23.5px;line-height:23.5px;letter-spacing:-0.67px">ma (50,ma,0)&nbsp; <span style="color:#d42020">0.01</span></div>
<div class="lbl" style="top:210px;width:291.5px;left:9px;height:23.5px;line-height:23.5px;letter-spacing:-0.47px">Bollinger Bands (20,2,ma,y)&nbsp; 0.02 0.01 -0.00</div>
<div class="lbl" style="top:242px;width:101px;left:9px;height:23.5px;line-height:23.5px;letter-spacing:-0.73px">VWAP (n,n,n)</div>
<div class="lbl" style="top:274px;width:80px;left:9px;height:23.5px;line-height:23.5px;letter-spacing:-0.2px">vol profile</div>
<div class="lbl" style="top:306px;width:24px;padding:0"><svg width="24" height="23.5" viewBox="0 0 24 23.500"><path d="M8.500 13.500l3.500-3.500 3.500 3.500" fill="none" stroke="#d0d0d0" stroke-width="1.300"/></svg></div>
<div class="lbl" style="top:1247.5px;width:95px;left:1px;height:21.5px;line-height:21.5px;letter-spacing:-0.45px">rsi (14)&nbsp; 45.90</div>
<div class="lbl" style="top:1537px;width:217px;left:1px;height:21px;line-height:21px;letter-spacing:-0.5px">macd (12,26,9)&nbsp; -0.00 <span style="color:#d42020">-0.00</span> 0.00</div>
<div class="abs" style="left:1657px;top:1186px;font-size:16.3px;color:#9b9fa4;white-space:nowrap;letter-spacing:-0.1px">VWAP is Intraday Only</div>
<div class="abs" style="left:1712px;top:1215.5px;width:53px;height:18.5px;background:rgba(32,48,58,0.92);border-radius:3px"></div>
<div class="abs" style="left:1719px;top:1224px;width:11px;height:2px;background:#cfd3d6"></div>
<div class="abs" style="left:1746px;top:1224px;width:11px;height:2px;background:#cfd3d6"></div><div class="abs" style="left:1750.500px;top:1219.500px;width:2px;height:11px;background:#cfd3d6"></div>
<div class="ax" style="top:326px;color:#8c939d">0.08</div>
<div class="ax" style="top:837px;color:#8c939d">0.03</div>
<div class="ax" style="top:1093px;color:#8c939d">0.00</div>
<div class="ax" style="top:1300px;color:#f0f0f0">80</div>
<div class="ax" style="top:1463px;color:#f0f0f0">20</div>
<div class="ax" style="top:1548.9px;color:#8c939d">0.01</div>
<div class="ax" style="top:1566.8px;color:#8c939d">0.01</div>
<div class="ax" style="top:1584.7px;color:#8c939d">0.01</div>
<div class="ax" style="top:1602.6000000000001px;color:#8c939d">0.00</div>
<div class="ax" style="top:1620.5px;color:#8c939d">0.00</div>
<div class="ax" style="top:1638.4px;color:#8c939d">0.00</div>
<div class="ax" style="top:1656.3px;color:#8c939d">0.00</div>
<div class="ax" style="top:1674.2px;color:#8c939d">0.00</div>
<div class="ax" style="top:1692.1000000000001px;color:#8c939d">-0.00</div>
<div class="ax" style="top:1710.0px;color:#8c939d">-0.00</div>
<div class="ax" style="top:1727.9px;color:#8c939d">-0.00</div>
<div class="ax" style="top:1745.8px;color:#8c939d">-0.00</div>
<div class="ax" style="top:1763.7px;color:#8c939d">-0.01</div>
<div class="ax" style="top:1781.6000000000001px;color:#8c939d">-0.01</div>
<div class="ax" style="top:1799.5px;color:#8c939d">-0.01</div>
<div class="ax" style="top:1817.4px;color:#8c939d">-0.01</div>
<div class="ax" style="top:1835.3px;color:#8c939d">-0.01</div>
<div class="ax" style="top:1853.2px;color:#8c939d">-0.01</div>
<div class="ax" style="top:1871.1px;color:#8c939d">-0.01</div>
<div class="axb" style="top:444.3px;background:#fff;color:#000;width:38px;height:25px;line-height:25px">0.06</div>
<div class="axb" style="top:578.7px;background:#0e7a64;color:#fff;width:38px;height:25px;line-height:25px">0.05</div>
<div class="axb" style="top:695.3px;background:#fff;color:#000;width:38px;height:25px;line-height:25px">0.04</div>
<div class="axb" style="top:733.9px;background:#f50000;color:#fff;width:38px;height:25px;line-height:25px">0.03</div>
<div class="axb" style="top:944.5px;background:#fff;color:#000;width:36px;height:25px;line-height:25px">0.01</div>
<div class="axb" style="top:1000.3px;background:#fff;color:#000;width:36px;height:25px;line-height:25px">0.01</div>
<div class="axb" style="top:1221.5px;width:44px;height:24.500px;line-height:24.500px;background:#b9bcc6;color:#4f545c;text-align:left;padding-left:6px;border-radius:3px 0 0 3px;overflow:hidden">210,92</div>
<div class="axb" style="top:1366.4px;width:44px;height:24px;line-height:24px;text-align:left;padding-left:6px;border-radius:3px 0 0 3px;overflow:hidden">54.82</div>
<div class="axb" style="top:1576.5px;background:#fff;color:#000;width:38px;height:25px;line-height:25px">0.01</div>
<div class="axb" style="top:1603.5px;background:#f50000;color:#fff;width:38px;height:25px;line-height:25px">0.00</div>
<div class="abs" style="left:3510px;top:692px;width:9.500px;height:30px;background:#1a62d6;border-radius:3px 0 0 3px;color:#0a2a5c;font-size:10px;line-height:28px;text-align:center;font-weight:bold">›</div>
<div class="xl" style="left:92.5px;top:1906px">Apr</div>
<div class="xl" style="left:266.5px;top:1906px">Jul</div>
<div class="xl" style="left:453.5px;top:1906px">Oct</div>
<div class="xl" style="left:627.5px;top:1922px">2014</div>
<div class="xl" style="left:800.5px;top:1906px">Apr</div>
<div class="xl" style="left:974.5px;top:1906px">Jul</div>
<div class="xl" style="left:1148.5px;top:1906px">Oct</div>
<div class="xl" style="left:1322.5px;top:1922px">2015</div>
<div class="xl" style="left:1495.5px;top:1906px">Apr</div>
<div class="xl" style="left:1669.5px;top:1906px">Jul</div>
<div class="xl" style="left:1843.5px;top:1906px">Oct</div>
<div class="xl" style="left:2017.5px;top:1922px">2016</div>
<div class="xl" style="left:2190.5px;top:1906px">Apr</div>
<div class="xl" style="left:2364.5px;top:1906px">Jul</div>
<div class="xl" style="left:2538.5px;top:1906px">Oct</div>
<div class="xl" style="left:2712.5px;top:1922px">2017</div>
<div class="xl" style="left:2885.5px;top:1906px">Apr</div>
<div class="xl" style="left:3059.5px;top:1906px">Jul</div>
<div class="xl" style="left:3233.5px;top:1906px">Oct</div>
<div class="xl" style="left:3407.5px;top:1922px">2018</div>
<div class="abs" style="left:1874.500px;top:1923px;width:85px;height:15px;background:#000;border-radius:2px;color:#fff;font-size:10.500px;line-height:15px;text-align:center">11/9/2015</div>

<!-- side panel -->
<div class="abs" style="left:3525px;top:101px;font-size:14.5px;font-weight:bold;color:#f0f0f0;letter-spacing:-0.25px">My Portfolio &amp; Markets</div>
<div class="abs" style="left:3723px;top:100px;font-size:13.5px;font-weight:bold;color:#2a7de1;letter-spacing:-0.6px">Customize</div>
<svg class="abs" style="left:3791px;top:103px" width="16" height="16" viewBox="0 0 16 16"><path d="M6.68 3.07 L6.95 1.38 L9.05 1.38 L9.32 3.07 L10.55 3.58 L11.94 2.58 L13.42 4.06 L12.42 5.45 L12.93 6.68 L14.62 6.95 L14.62 9.05 L12.93 9.32 L12.42 10.55 L13.42 11.94 L11.94 13.42 L10.55 12.42 L9.32 12.93 L9.05 14.62 L6.95 14.62 L6.68 12.93 L5.45 12.42 L4.06 13.42 L2.58 11.94 L3.58 10.55 L3.07 9.32 L1.38 9.05 L1.38 6.95 L3.07 6.68 L3.58 5.45 L2.58 4.06 L4.06 2.58 L5.45 3.58Z" fill="none" stroke="#2a7de1" stroke-width="1.250" stroke-linejoin="round"/><circle cx="8" cy="8" r="2.200" fill="none" stroke="#2a7de1" stroke-width="1.200"/></svg>
<div class="abs" style="left:3525px;top:138px;font-size:15.5px;font-weight:bold;color:#222a33">My Watchlists</div>
<div class="abs" style="left:3525px;top:168px;width:289px;height:108px;border:1.5px solid #e9e9e9;border-radius:2px"></div>
<div class="abs" style="left:3525px;top:190px;width:289px;text-align:center;font-size:13px;font-weight:bold;color:#eee;letter-spacing:-0.35px">Sign-in to view your list and add symbols.</div>
<div class="abs" style="left:3620px;top:219px;width:100px;height:36px;border-radius:4px;background:#1963d6;color:#fff;font-size:12.5px;font-weight:bold;text-align:center;line-height:36px;letter-spacing:-0.4px">Sign In</div>

<!-- bottom range bar -->
<div class="rng" style="left:27px">1M</div>
<div class="rng" style="left:67px">3M</div>
<div class="rng" style="left:109px">6M</div>
<div class="rng" style="left:151px">YTD</div>
<div class="rng" style="left:198px">1Y</div>
<div class="rng" style="left:224px;top:1939px;width:38px;height:24px;background:#25386b;border-radius:3px;color:#9fd0ff;line-height:26px">5Y</div>
<div class="rng" style="left:273px">10Y</div>
<div class="rng" style="left:318px">All</div>
<div class="abs" style="left:361px;top:1942px;width:1px;height:20px;background:#3a3f47"></div>
<svg class="abs" style="left:379px;top:1944px" width="11" height="12" viewBox="0 0 11 12"><rect x="0.700" y="1.700" width="9.600" height="9.600" rx="1" fill="none" stroke="#d0d0d0" stroke-width="1.200"/><line x1="0.700" y1="3.800" x2="10.300" y2="3.800" stroke="#d0d0d0" stroke-width="1.200"/></svg>
<div class="abs" style="left:395px;top:1942px;font-size:14.5px;font-weight:bold;color:#f2f2f2;text-decoration:underline;letter-spacing:-0.07px">Sep 04, 2020 - Sep 05, 2025</div>
<div class="abs" style="left:598px;top:1942px;width:1px;height:20px;background:#3a3f47"></div>
<div class="abs" style="left:614px;top:1943px;font-size:14px;font-weight:bold;color:#aab1bb">Interval:</div>
<div class="abs" style="left:694px;top:1943px;font-size:14px;font-weight:bold;color:#aab1bb;letter-spacing:-0.2px">1 week</div>
<svg class="abs" style="left:744px;top:1947px" width="10" height="10" viewBox="0 0 10 10"><path d="M2 3.500l3 3 3-3" fill="none" stroke="#aab1bb" stroke-width="1.300"/></svg>

<!-- footer -->
<div class="abs" style="left:0;top:1973px;width:3824px;height:40px;background:#000"></div>
<div class="ft" style="left:16px;top:1986.5px;font-size:13.5px;font-weight:bold;color:#eee;letter-spacing:-0.05px">© 2025 Yahoo. All rights reserved.In partnership with ChartIQ</div>
<div class="ft" style="left:3358px;top:1978px;font-weight:bold;font-size:11.3px;letter-spacing:-0.45px">Data Disclaimer<br>What's New</div>
<div class="ft" style="left:3450px;top:1978px;font-weight:bold;font-size:11.3px;letter-spacing:-0.45px">Help<br>About Our Ads</div>
<div class="ft" style="left:3541px;top:1978px;font-weight:bold;font-size:11.3px;letter-spacing:-0.45px">Feedback<br>Terms</div>
<div class="ft" style="left:3633px;top:1978px;font-weight:bold;font-size:11.3px;letter-spacing:-0.45px">Sitemap<br>Privacy Policy</div>
<div class="abs" style="left:3712px;top:1981px;width:24px;height:24px;border-radius:12px;background:#e0e0e0;color:#222;font-size:15px;text-align:center;line-height:24px">𝕏</div>
<div class="abs" style="left:3748px;top:1981px;width:24px;height:24px;border-radius:12px;background:#e0e0e0;overflow:hidden"><svg width="24" height="24" viewBox="0 0 24 24"><path d="M13.300 24v-9.300h3.100l.5-3.600h-3.600V8.800c0-1 .3-1.700 1.800-1.700h1.900V3.900c-.3 0-1.500-.1-2.800-.1-2.800 0-4.600 1.700-4.600 4.700v2.600H6.500v3.600h3.100V24z" fill="#111"/></svg></div>
<div class="abs" style="left:3784px;top:1981px;width:24px;height:24px;border-radius:12px;background:#e0e0e0;color:#111;font-size:15px;font-weight:bold;text-align:center;line-height:24px;letter-spacing:-0.3px">in</div>
</body></html>
